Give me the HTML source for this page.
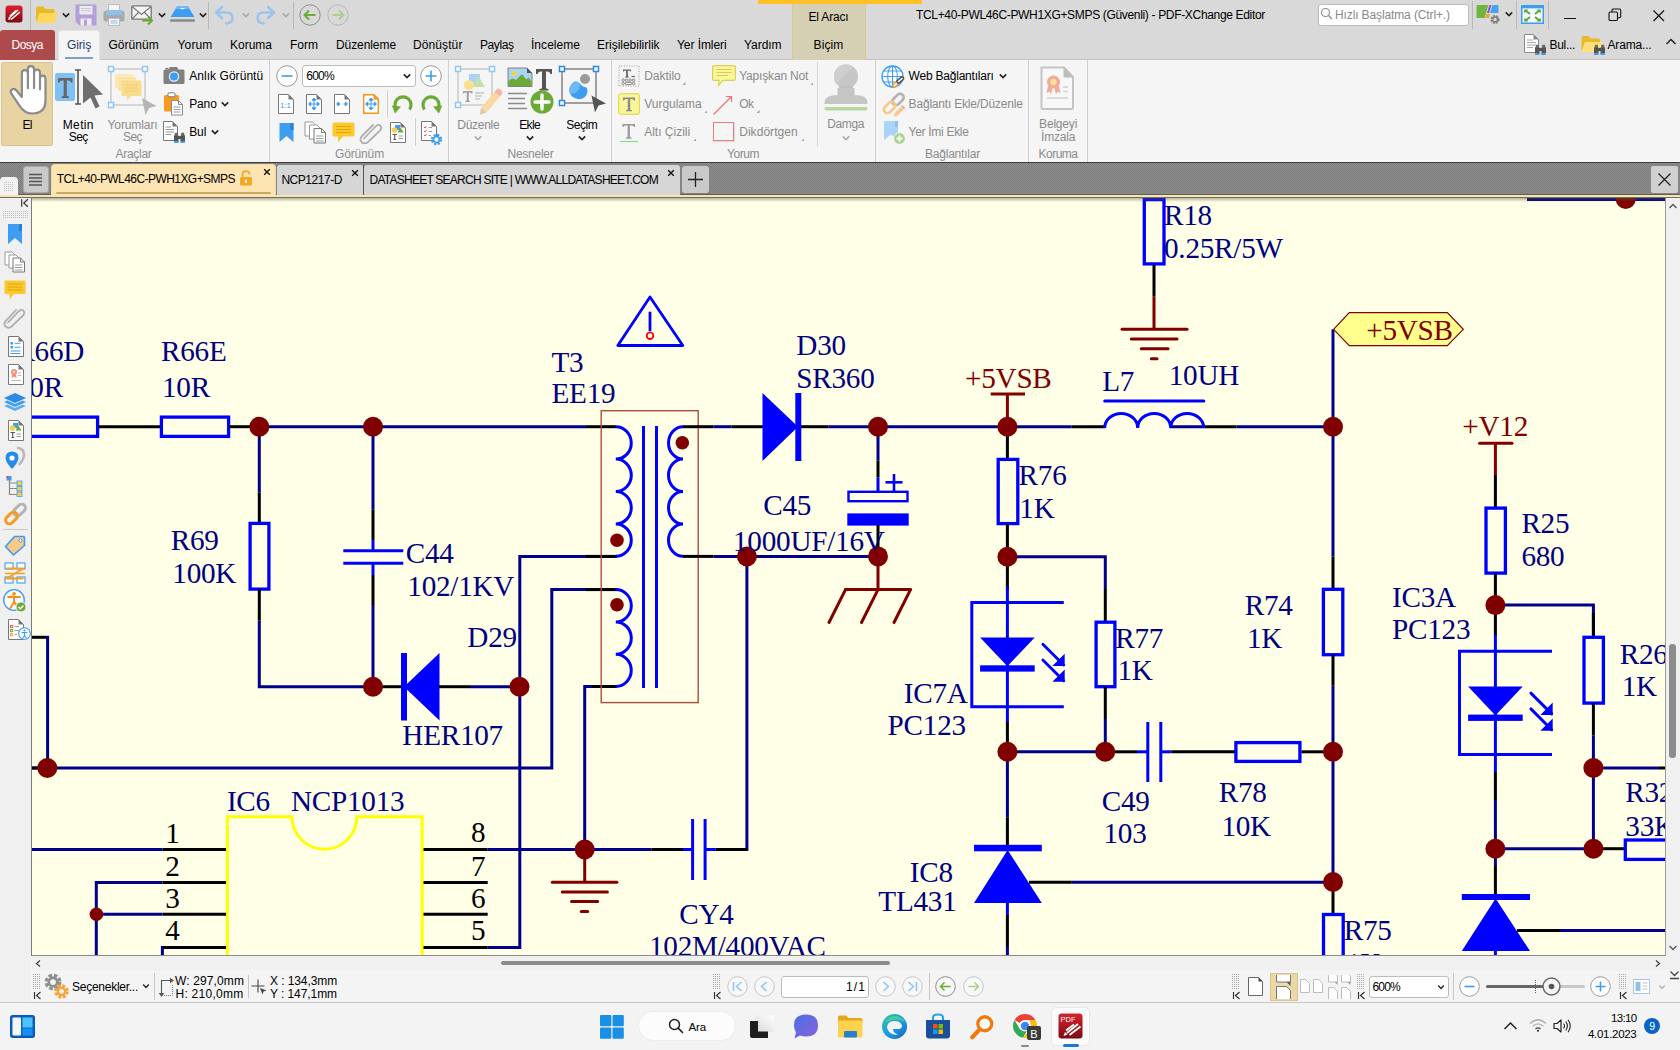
<!DOCTYPE html>
<html lang="tr"><head><meta charset="utf-8"><title>TCL+40-PWL46C-PWH1XG+SMPS (Güvenli) - PDF-XChange Editor</title>
<style>
*{box-sizing:border-box;margin:0;padding:0}
html,body{width:1680px;height:1050px;overflow:hidden;background:#f4f4f4}
body{font-family:"Liberation Sans",sans-serif;font-size:12px;color:#000}
#app{position:relative;width:1680px;height:1050px;overflow:hidden}
.abs{position:absolute}
#docarea{position:absolute;left:0;top:195px;width:1680px;height:762px;background:#f0f0f0}
.t{position:absolute;white-space:nowrap;display:block}

</style></head>
<body>
<div id="app">
<div id="docarea"></div>
<div class="abs" style="left:0px;top:0px;width:1680px;height:60px;background:#d9d9d9"></div>
<div class="abs" style="left:0px;top:59px;width:1680px;height:1px;background:#c4c4c4"></div>
<div class="abs" style="left:758px;top:0px;width:164px;height:4px;background:#ffc125"></div>
<div class="abs" style="left:792px;top:4px;width:74px;height:56px;background:#d5cfb3;border-left:1px solid #d8c98f;border-right:1px solid #d8c98f"></div>
<span class="t" style="left:808.5px;top:10.0px;font-size:12px;line-height:14px;color:#000;letter-spacing:-0.17px;">El Aracı</span>
<span class="t" style="left:813.5px;top:38.2px;font-size:12px;line-height:14px;color:#000;letter-spacing:0.13px;">Biçim</span>
<svg class="abs" style="left:5px;top:5px" width="18" height="18" viewBox="0 0 18 18"><defs><linearGradient id="ag" x1="0" y1="0" x2="0" y2="1"><stop offset="0" stop-color="#e0202c"/><stop offset="1" stop-color="#7a0a10"/></linearGradient></defs><rect x="0.5" y="0.5" width="17" height="17" rx="3" fill="url(#ag)"/><path d="M4,13 L13,5 M6,14.5 L15,7 M5,11 L11,5.5" stroke="#fff" stroke-width="1.6"/><path d="M3,15 L4,12 L6,14 Z" fill="#fff"/></svg>
<div class="abs" style="left:30px;top:0px;width:1px;height:30px;background:#b8b8b8"></div>
<svg class="abs" style="left:35px;top:5px" width="24" height="20" viewBox="0 0 24 20"><path d="M1,3 Q1,1.5 2.5,1.5 H8 L10.5,4 H18 Q19.5,4 19.5,5.5 V16 H1 Z" fill="#e9b92a"/><path d="M4.5,8 H22.5 L19.5,18 H1 Z" fill="#ffd85a"/></svg>
<svg class="abs" style="left:61.3px;top:10.5px" width="10" height="8" viewBox="0 0 10 8"><path d="M1.7999999999999998,2.4 L5,5.6 L8.2,2.4" fill="none" stroke="#222" stroke-width="1.6"/></svg>
<svg class="abs" style="left:75px;top:4px" width="22" height="22" viewBox="0 0 22 22"><path d="M0.5,1.5 Q0.5,0.5 1.5,0.5 H20.5 Q21.5,0.5 21.5,1.5 V21.5 H4.5 L0.5,17.5 Z" fill="#b49fd6"/><rect x="4.5" y="2" width="13" height="8.5" fill="#ececf0"/><path d="M6,4.5 H16 M6,6.8 H16" stroke="#c9c9d2" stroke-width="1"/><rect x="5.5" y="14.5" width="11" height="7" fill="#ececf0"/><rect x="9" y="15.5" width="3" height="6" fill="#b49fd6"/></svg>
<svg class="abs" style="left:103px;top:4px" width="22" height="22" viewBox="0 0 22 22"><rect x="5.5" y="0.5" width="11" height="7" fill="#f4f4f4" stroke="#bdbdbd"/><rect x="0.5" y="7" width="21" height="10.5" rx="2" fill="#a9a9a9"/><rect x="3" y="6" width="16" height="5" fill="#8fc0ea"/><rect x="5.5" y="14.5" width="11" height="7" fill="#f4f4f4" stroke="#bdbdbd"/><path d="M7.5,17 H14.5 M7.5,19 H14.5" stroke="#8fc0ea" stroke-width="1"/></svg>
<svg class="abs" style="left:131px;top:5px" width="24" height="21" viewBox="0 0 24 21"><rect x="0.8" y="0.8" width="19.4" height="13.4" rx="1" fill="#f3f3f3" stroke="#777" stroke-width="1.3"/><path d="M1,1.5 L10.5,9.5 L20,1.5 M1,14 L7.5,7.5 M20,14 L13.5,7.5" fill="none" stroke="#777" stroke-width="1.1"/><path d="M11,15.5 H20.5 M17,11.5 L21,15.5 L17,19.5" fill="none" stroke="#6aaa35" stroke-width="2"/></svg>
<svg class="abs" style="left:157.3px;top:10.5px" width="10" height="8" viewBox="0 0 10 8"><path d="M1.7999999999999998,2.4 L5,5.6 L8.2,2.4" fill="none" stroke="#222" stroke-width="1.6"/></svg>
<svg class="abs" style="left:170px;top:6px" width="25" height="17" viewBox="0 0 25 17"><path d="M7,0.5 H18 L24.5,11 H0.5 Z" fill="#3d9df0"/><path d="M7,0.5 H18 L19.5,3 H5.5 Z" fill="#6db8f7"/><rect x="10.5" y="2" width="4" height="1.2" fill="#fff"/><path d="M1,14.5 H24" stroke="#8a8a8a" stroke-width="2.4" stroke-linecap="round"/></svg>
<svg class="abs" style="left:197.5px;top:10.5px" width="10" height="8" viewBox="0 0 10 8"><path d="M1.7999999999999998,2.4 L5,5.6 L8.2,2.4" fill="none" stroke="#222" stroke-width="1.6"/></svg>
<div class="abs" style="left:208px;top:2px;width:1px;height:27px;background:#b8b8b8"></div>
<svg class="abs" style="left:213px;top:4px" width="24" height="22" viewBox="0 0 24 22"><path d="M9,3 L3,8.5 L9,14 M3.5,8.5 H13 Q19.5,8.5 19.5,14 Q19.5,19 13,19.5" fill="none" stroke="#9cc3ee" stroke-width="2.4" stroke-linecap="round" stroke-linejoin="round"/></svg>
<svg class="abs" style="left:241px;top:10.5px" width="10" height="8" viewBox="0 0 10 8"><path d="M1.7999999999999998,2.4 L5,5.6 L8.2,2.4" fill="none" stroke="#aaa" stroke-width="1.6"/></svg>
<svg class="abs" style="left:253px;top:4px" width="24" height="22" viewBox="0 0 24 22"><path d="M15,3 L21,8.5 L15,14 M20.500,8.5 H11 Q4.500,8.5 4.500,14 Q4.500,19 11,19.5" fill="none" stroke="#9cc3ee" stroke-width="2.4" stroke-linecap="round" stroke-linejoin="round"/></svg>
<svg class="abs" style="left:281px;top:10.5px" width="10" height="8" viewBox="0 0 10 8"><path d="M1.7999999999999998,2.4 L5,5.6 L8.2,2.4" fill="none" stroke="#aaa" stroke-width="1.6"/></svg>
<div class="abs" style="left:293px;top:2px;width:1px;height:27px;background:#b8b8b8"></div>
<svg class="abs" style="left:299px;top:4px" width="22" height="22" viewBox="0 0 22 22"><circle cx="11" cy="11" r="10.2" fill="none" stroke="#8d8d8d" stroke-width="1"/><path d="M16.5,11 H6 M10,6.5 L5.5,11 L10,15.5" fill="none" stroke="#6aaa35" stroke-width="2"/></svg>
<svg class="abs" style="left:327px;top:4px" width="22" height="22" viewBox="0 0 22 22"><circle cx="11" cy="11" r="10.2" fill="none" stroke="#b5b5b5" stroke-width="1"/><path d="M5.5,11 H16 M12,6.5 L16.5,11 L12,15.5" fill="none" stroke="#a9cf8a" stroke-width="2"/></svg>
<span class="t" style="left:916.0px;top:8.2px;font-size:12px;line-height:14px;color:#000;letter-spacing:-0.33px;">TCL+40-PWL46C-PWH1XG+SMPS (Güvenli) - PDF-XChange Editor</span>
<div class="abs" style="left:1317.5px;top:3.5px;width:151px;height:22px;background:#fff;border:1px solid #bdbdbd;border-radius:3px"></div>
<svg class="abs" style="left:1320px;top:7px" width="14" height="14" viewBox="0 0 14 14"><circle cx="5.5" cy="5.5" r="4" fill="none" stroke="#8a8a8a" stroke-width="1.1"/><path d="M8.5,8.500 L12,12" stroke="#8a8a8a" stroke-width="1.2"/></svg>
<span class="t" style="left:1335.0px;top:7.8px;font-size:12px;line-height:14px;color:#8a8a8a;letter-spacing:-0.12px;">Hızlı Başlatma (Ctrl+.)</span>
<div class="abs" style="left:1471.5px;top:1px;width:1px;height:28px;background:#b8b8b8"></div>
<svg class="abs" style="left:1476px;top:4px" width="25" height="22" viewBox="0 0 25 22"><path d="M0.5,1 H12.500 L8.500,14 H0.5 Z" fill="#6fb543"/><path d="M13.5,1 H15.5 L13,9 H11 Z" fill="#8a4fc4"/><path d="M16.500,1 H22.500 V9 H14 Z" fill="#4aa3f0"/><path d="M10,10 H14 L13,14 H9 Z" fill="#f2a33a"/><circle cx="19" cy="15.5" r="3.2" fill="none" stroke="#808080" stroke-width="2.6" stroke-dasharray="1.7 0.9"/><circle cx="19" cy="15.5" r="2.500" fill="none" stroke="#808080" stroke-width="1.4"/></svg>
<svg class="abs" style="left:1503.6px;top:10px" width="10" height="8" viewBox="0 0 10 8"><path d="M1.7999999999999998,2.4 L5,5.6 L8.2,2.4" fill="none" stroke="#222" stroke-width="1.6"/></svg>
<div class="abs" style="left:1515.5px;top:1px;width:1px;height:28px;background:#b8b8b8"></div>
<svg class="abs" style="left:1521px;top:5px" width="23" height="19" viewBox="0 0 23 19"><rect x="0.750" y="0.750" width="21.500" height="17.500" fill="#f4f9ff" stroke="#3d9df0" stroke-width="1.500"/><rect x="0.750" y="0.750" width="21.500" height="2.600" fill="#3d9df0"/><g stroke="#55a630" stroke-width="1.700" fill="none"><path d="M9,9 L4.500,5.500 M14,9 L18.500,5.500 M9,12 L4.500,15.500 M14,12 L18.500,15.500"/></g><path d="M3.200,4.500 h4.300 l-4.300,3.800 z M19.800,4.500 h-4.300 l4.300,3.800 z M3.200,16.600 h4.300 l-4.300,-3.800 z M19.800,16.600 h-4.300 l4.300,-3.800 z" fill="#55a630"/></svg>
<div class="abs" style="left:1547.5px;top:1px;width:1px;height:28px;background:#b8b8b8"></div>
<div class="abs" style="left:1564px;top:17.5px;width:12px;height:1.2px;background:#111"></div>
<svg class="abs" style="left:1608px;top:8px" width="14" height="14" viewBox="0 0 14 14"><rect x="1" y="4" width="8.500" height="8.500" rx="1.2" fill="none" stroke="#111" stroke-width="1.1"/><path d="M4,4 V2.200 Q4,1 5.200,1 H11.5 Q12.700,1 12.700,2.200 V8.500 Q12.700,9.700 11.5,9.700 H9.500" fill="none" stroke="#111" stroke-width="1.1"/></svg>
<svg class="abs" style="left:1652px;top:9px" width="14" height="14" viewBox="0 0 14 14"><path d="M1.500,1.500 L12,12 M12,1.500 L1.500,12" stroke="#111" stroke-width="1.2"/></svg>
<div class="abs" style="left:0px;top:30px;width:55px;height:30px;background:#ad4a4c;border-radius:3px 3px 0 0"></div>
<span class="t" style="left:11.5px;top:38.2px;font-size:12px;line-height:14px;color:#fff;letter-spacing:-0.54px;">Dosya</span>
<div class="abs" style="left:58px;top:30px;width:41.5px;height:30px;background:#f5f5f5;border-radius:4px 4px 0 0;border:1px solid #e4e4e4;border-bottom:none"></div>
<span class="t" style="left:67.0px;top:38.2px;font-size:12px;line-height:14px;color:#1f3a6e;letter-spacing:-0.13px;">Giriş</span>
<div class="abs" style="left:64.5px;top:57px;width:28.5px;height:2px;background:#7f9fc4"></div>
<span class="t" style="left:108.5px;top:38.2px;font-size:12px;line-height:14px;color:#000;letter-spacing:0.04px;">Görünüm</span>
<span class="t" style="left:177.5px;top:38.2px;font-size:12px;line-height:14px;color:#000;letter-spacing:0.15px;">Yorum</span>
<span class="t" style="left:230.0px;top:38.2px;font-size:12px;line-height:14px;color:#000;letter-spacing:-0.00px;">Koruma</span>
<span class="t" style="left:290.0px;top:38.2px;font-size:12px;line-height:14px;color:#000;letter-spacing:0.00px;">Form</span>
<span class="t" style="left:336.0px;top:38.2px;font-size:12px;line-height:14px;color:#000;letter-spacing:-0.08px;">Düzenleme</span>
<span class="t" style="left:413.0px;top:38.2px;font-size:12px;line-height:14px;color:#000;letter-spacing:0.10px;">Dönüştür</span>
<span class="t" style="left:480.0px;top:38.2px;font-size:12px;line-height:14px;color:#000;letter-spacing:-0.42px;">Paylaş</span>
<span class="t" style="left:531.0px;top:38.2px;font-size:12px;line-height:14px;color:#000;letter-spacing:0.04px;">İnceleme</span>
<span class="t" style="left:597.0px;top:38.2px;font-size:12px;line-height:14px;color:#000;letter-spacing:-0.01px;">Erişilebilirlik</span>
<span class="t" style="left:677.0px;top:38.2px;font-size:12px;line-height:14px;color:#000;letter-spacing:-0.07px;">Yer İmleri</span>
<span class="t" style="left:744.0px;top:38.2px;font-size:12px;line-height:14px;color:#000;letter-spacing:-0.05px;">Yardım</span>
<svg class="abs" style="left:1524px;top:34px" width="15" height="19" viewBox="0 0 15 19"><path d="M0.5,0.5 H9.5 L14.5,5.5 V18.5 H0.5 Z" fill="#fff" stroke="#8a8a8a" stroke-width="1"/><path d="M9.5,0.5 V5.5 H14.5 Z" fill="#8a8a8a"/><path d="M3,6 H9 M3,8.500 H12 M3,11 H12 M3,13.500 H9" stroke="#aaa" stroke-width="1"/></svg>
<svg class="abs" style="left:1534px;top:44px" width="13.0" height="11.0" viewBox="0 0 13 11"><rect x="1" y="3" width="4.500" height="7.500" rx="1" fill="#555"/><rect x="7.500" y="3" width="4.500" height="7.500" rx="1" fill="#555"/><rect x="4.500" y="4" width="4" height="3" fill="#555"/><rect x="1.800" y="0.800" width="3" height="3" fill="#666"/><rect x="8.200" y="0.800" width="3" height="3" fill="#666"/><rect x="1" y="9" width="4.500" height="1.800" fill="#3d9df0"/><rect x="7.500" y="9" width="4.500" height="1.800" fill="#3d9df0"/></svg>
<span class="t" style="left:1549.5px;top:37.6px;font-size:12px;line-height:14px;color:#000;letter-spacing:-0.31px;">Bul...</span>
<svg class="abs" style="left:1581px;top:35px" width="24" height="19" viewBox="0 0 24 19"><path d="M0.5,2.500 Q0.5,1 2,1 H7.500 L10,3.500 H17.500 Q19,3.500 19,5 V15 H0.5 Z" fill="#e9b92a"/><path d="M4,7 H22 L19,17 H0.5 Z" fill="#ffdf7a"/></svg>
<svg class="abs" style="left:1593px;top:44px" width="13.0" height="11.0" viewBox="0 0 13 11"><rect x="1" y="3" width="4.500" height="7.500" rx="1" fill="#555"/><rect x="7.500" y="3" width="4.500" height="7.500" rx="1" fill="#555"/><rect x="4.500" y="4" width="4" height="3" fill="#555"/><rect x="1.800" y="0.800" width="3" height="3" fill="#666"/><rect x="8.200" y="0.800" width="3" height="3" fill="#666"/><rect x="1" y="9" width="4.500" height="1.800" fill="#3d9df0"/><rect x="7.500" y="9" width="4.500" height="1.800" fill="#3d9df0"/></svg>
<span class="t" style="left:1607.5px;top:37.6px;font-size:12px;line-height:14px;color:#000;letter-spacing:-0.17px;">Arama...</span>
<svg class="abs" style="left:1665px;top:37px" width="12" height="9" viewBox="0 0 12 9"><path d="M1.500,7 L6,2.500 L10.500,7" fill="none" stroke="#222" stroke-width="1.5"/></svg>
<div class="abs" style="left:0px;top:60px;width:1680px;height:102px;background:#f5f5f5"></div>
<div class="abs" style="left:0px;top:162px;width:1680px;height:1px;background:#3c3c3c"></div>
<div class="abs" style="left:269px;top:60px;width:1px;height:102px;background:#d0d0d0"></div>
<div class="abs" style="left:448px;top:60px;width:1px;height:102px;background:#d0d0d0"></div>
<div class="abs" style="left:611px;top:60px;width:1px;height:102px;background:#d0d0d0"></div>
<div class="abs" style="left:875px;top:60px;width:1px;height:102px;background:#d0d0d0"></div>
<div class="abs" style="left:1028px;top:60px;width:1px;height:102px;background:#d0d0d0"></div>
<div class="abs" style="left:1087px;top:60px;width:1px;height:102px;background:#d0d0d0"></div>
<span class="t" style="left:115.5px;top:146.6px;font-size:12px;line-height:14px;color:#8c8c8c;letter-spacing:-0.29px;">Araçlar</span>
<span class="t" style="left:335.0px;top:146.6px;font-size:12px;line-height:14px;color:#8c8c8c;letter-spacing:-0.15px;">Görünüm</span>
<span class="t" style="left:507.5px;top:146.6px;font-size:12px;line-height:14px;color:#8c8c8c;letter-spacing:-0.25px;">Nesneler</span>
<span class="t" style="left:727.0px;top:146.6px;font-size:12px;line-height:14px;color:#8c8c8c;letter-spacing:-0.45px;">Yorum</span>
<span class="t" style="left:925.0px;top:146.6px;font-size:12px;line-height:14px;color:#8c8c8c;letter-spacing:-0.22px;">Bağlantılar</span>
<span class="t" style="left:1038.5px;top:146.6px;font-size:12px;line-height:14px;color:#8c8c8c;letter-spacing:-0.50px;">Koruma</span>
<div class="abs" style="left:1px;top:62px;width:52px;height:84px;background:#e8d4a2;border:1px solid #d9c48f;border-radius:2px"></div>
<svg class="abs" style="left:6.5px;top:63.5px" width="46.2" height="57.2" viewBox="0 0 42 52"><path d="M13.500,26 V8.500 Q13.500,5.500 16.200,5.500 Q19,5.500 19,8.500 V5 Q19,2 21.800,2 Q24.600,2 24.600,5 V8 Q24.600,5.200 27.300,5.200 Q30,5.200 30,8.200 V13 Q30,10.500 32.500,10.500 Q35,10.500 35,13.500 V33 Q35,45 23,45 Q16,45 11.500,38 L4,27 Q2.500,24.500 4.800,23 Q7,22 9,24.500 L13.500,30 Z" fill="#fff" stroke="#8c8c8c" stroke-width="2" stroke-linejoin="round"/><path d="M19,8.500 V22 M24.600,8 V22 M30,13 V23" stroke="#8c8c8c" stroke-width="2" stroke-linecap="round"/></svg>
<span class="t" style="left:22.4px;top:117.7px;font-size:12px;line-height:14px;color:#000;letter-spacing:-0.59px;">El</span>
<svg class="abs" style="left:55px;top:66px" width="50" height="48" viewBox="0 0 50 48"><rect x="0" y="7" width="20" height="28" rx="2" fill="#7fc1f5"/><path d="M3,12 H17.500 V16.500 H16 Q15.500,14.500 13.500,14.500 H11.800 V29 Q11.800,30.500 14,30.500 V32 H6.500 V30.500 Q8.700,30.500 8.700,29 V14.500 H7 Q5,14.500 4.500,16.500 H3 Z" fill="#666"/><path d="M20,4 H26 M23,4 V38 M20,38 H26" stroke="#555" stroke-width="1.6"/><path d="M28,9 L48,28.500 L39.500,29.500 L44.500,40.500 L40.500,42.500 L35.500,31.500 L28,37.500 Z" fill="#6e6e6e"/></svg>
<span class="t" style="left:62.8px;top:117.7px;font-size:12px;line-height:14px;color:#000;letter-spacing:0.33px;">Metin</span>
<span class="t" style="left:68.8px;top:130.2px;font-size:12px;line-height:14px;color:#000;letter-spacing:-0.56px;">Seç</span>
<svg class="abs" style="left:107px;top:65px" width="52" height="52" viewBox="0 0 52 52"><rect x="4" y="4" width="34" height="36" fill="none" stroke="#c8c8c8" stroke-width="1.4"/><rect x="8" y="9" width="18" height="14" rx="1.5" fill="#fbe9b7"/><rect x="11" y="12" width="18" height="14" rx="1.5" fill="#fae3a4"/><path d="M14.500,15.500 H33 Q34.500,15.500 34.500,17 V29.500 Q34.500,31 33,31 H24.500 L20,35.500 V31 H16 Q14.500,31 14.500,29.500 Z" fill="#f9dc8e"/><path d="M18,20 H31 M18,23 H31 M18,26 H31" stroke="#f3cd70" stroke-width="1.2"/><rect x="1.500" y="1.500" width="5" height="5" fill="#fff" stroke="#8fc6f4" stroke-width="1.5"/><rect x="35.500" y="1.500" width="5" height="5" fill="#fff" stroke="#8fc6f4" stroke-width="1.5"/><rect x="1.500" y="37.500" width="5" height="5" fill="#fff" stroke="#8fc6f4" stroke-width="1.5"/><path d="M35,33 L49.500,41 L42,43 L38.500,50 Z" fill="#b5b5b5"/></svg>
<span class="t" style="left:107.5px;top:117.7px;font-size:12px;line-height:14px;color:#8a8a8a;letter-spacing:-0.10px;">Yorumları</span>
<span class="t" style="left:123.0px;top:130.2px;font-size:12px;line-height:14px;color:#8a8a8a;letter-spacing:-0.56px;">Seç</span>
<svg class="abs" style="left:163px;top:66px" width="22" height="19" viewBox="0 0 22 19"><path d="M0.5,5 Q0.5,3.500 2,3.500 H5.500 L7,1 H14 L15.500,3.500 H20 Q21.500,3.500 21.500,5 V16.500 Q21.500,18 20,18 H2 Q0.5,18 0.5,16.500 Z" fill="#808080"/><circle cx="11" cy="10.500" r="5.200" fill="#e9f3fc"/><circle cx="11" cy="10.500" r="4" fill="#3d9df0"/><rect x="2.500" y="1.800" width="3" height="1.700" fill="#808080"/></svg>
<span class="t" style="left:189.2px;top:69.3px;font-size:12px;line-height:14px;color:#000;letter-spacing:0.05px;">Anlık Görüntü</span>
<svg class="abs" style="left:163px;top:92px" width="22" height="24" viewBox="0 0 22 24"><rect x="1" y="3" width="15" height="16.500" rx="1.500" fill="#f79a1f"/><rect x="5" y="0.800" width="7" height="4" rx="1.200" fill="#fff" stroke="#777" stroke-width="1"/><path d="M8.500,8.500 H15.500 L19.500,12.500 V23 H8.500 Z" fill="#fff" stroke="#888" stroke-width="1"/><path d="M15.500,8.500 V12.500 H19.500" fill="none" stroke="#888" stroke-width="1"/><path d="M10.500,15 H17.500 M10.500,17.500 H17.500 M10.500,20 H17.500" stroke="#999" stroke-width="1"/></svg>
<span class="t" style="left:189.2px;top:97.3px;font-size:12px;line-height:14px;color:#000;letter-spacing:-0.13px;">Pano</span>
<svg class="abs" style="left:220.3px;top:99.5px" width="10" height="8" viewBox="0 0 10 8"><path d="M1.7999999999999998,2.4 L5,5.6 L8.2,2.4" fill="none" stroke="#222" stroke-width="1.6"/></svg>
<svg class="abs" style="left:163px;top:121px" width="15" height="20" viewBox="0 0 15 20"><path d="M0.5,0.5 H9.5 L14.5,5.5 V19.5 H0.5 Z" fill="#fff" stroke="#777" stroke-width="1"/><path d="M9.5,0.5 V5.5 H14.5 Z" fill="#777"/><path d="M2.500,6 H8 M2.500,8.500 H11 M2.500,11 H11 M2.500,13.500 H8" stroke="#999" stroke-width="1"/></svg>
<svg class="abs" style="left:173px;top:132px" width="13.0" height="11.0" viewBox="0 0 13 11"><rect x="1" y="3" width="4.500" height="7.500" rx="1" fill="#555"/><rect x="7.500" y="3" width="4.500" height="7.500" rx="1" fill="#555"/><rect x="4.500" y="4" width="4" height="3" fill="#555"/><rect x="1.800" y="0.800" width="3" height="3" fill="#666"/><rect x="8.200" y="0.800" width="3" height="3" fill="#666"/><rect x="1" y="9" width="4.500" height="1.800" fill="#3d9df0"/><rect x="7.500" y="9" width="4.500" height="1.800" fill="#3d9df0"/></svg>
<span class="t" style="left:189.2px;top:125.2px;font-size:12px;line-height:14px;color:#000;letter-spacing:-0.11px;">Bul</span>
<svg class="abs" style="left:210.3px;top:127.5px" width="10" height="8" viewBox="0 0 10 8"><path d="M1.7999999999999998,2.4 L5,5.6 L8.2,2.4" fill="none" stroke="#222" stroke-width="1.6"/></svg>
<svg class="abs" style="left:276.2px;top:65px" width="22" height="22" viewBox="0 0 22 22"><circle cx="11" cy="11" r="10.300" fill="#fff" stroke="#9a9a9a" stroke-width="1"/><path d="M5.500,11 H16.500" stroke="#3d9df0" stroke-width="1.600"/></svg>
<svg class="abs" style="left:420px;top:65px" width="22" height="22" viewBox="0 0 22 22"><circle cx="11" cy="11" r="10.300" fill="#fff" stroke="#9a9a9a" stroke-width="1"/><path d="M5.500,11 H16.500 M11,5.500 V16.500" stroke="#3d9df0" stroke-width="1.600"/></svg>
<div class="abs" style="left:302px;top:64.5px;width:113.5px;height:22px;background:#fff;border:1px solid #bdbdbd;border-radius:3px"></div>
<span class="t" style="left:306.3px;top:69.3px;font-size:12px;line-height:14px;color:#000;letter-spacing:-0.80px;">600%</span>
<svg class="abs" style="left:402.2px;top:71.5px" width="10" height="8" viewBox="0 0 10 8"><path d="M1.7999999999999998,2.4 L5,5.6 L8.2,2.4" fill="none" stroke="#222" stroke-width="1.6"/></svg>
<svg class="abs" style="left:278.3px;top:93.5px" width="16" height="20" viewBox="0 0 16 20"><path d="M0.5,0.5 H10.5 L15.5,5.5 V19.5 H0.5 Z" fill="#fff" stroke="#777" stroke-width="1"/><path d="M10.5,0.5 V5.5 H15.5 Z" fill="#777"/><text x="7.500" y="14" font-size="8" fill="#3d9df0" text-anchor="middle" font-family="Liberation Sans,sans-serif">1:1</text></svg>
<svg class="abs" style="left:306.3px;top:93.5px" width="16" height="20" viewBox="0 0 16 20"><path d="M0.5,0.5 H10.5 L15.5,5.5 V19.5 H0.5 Z" fill="#fff" stroke="#777" stroke-width="1"/><path d="M10.5,0.5 V5.5 H15.5 Z" fill="#777"/><path d="M8,4.500 V15.500 M3,10 H13 M8,4 l-2,2.200 h4 z M8,16 l-2,-2.200 h4 z M2.500,10 l2.200,-2 v4 z M13.500,10 l-2.200,-2 v4 z" stroke="#3d9df0" stroke-width="1" fill="#3d9df0"/></svg>
<svg class="abs" style="left:334.3px;top:93.5px" width="16" height="20" viewBox="0 0 16 20"><path d="M0.5,0.5 H10.5 L15.5,5.5 V19.5 H0.5 Z" fill="#fff" stroke="#777" stroke-width="1"/><path d="M10.5,0.5 V5.5 H15.5 Z" fill="#777"/><path d="M3,10 H6.500 M9.500,10 H13 M2.500,10 l2.200,-2 v4 z M13.500,10 l-2.200,-2 v4 z" stroke="#3d9df0" stroke-width="1" fill="#3d9df0"/></svg>
<svg class="abs" style="left:362.5px;top:93.5px" width="16" height="20" viewBox="0 0 16 20"><path d="M0.5,0.5 H10.5 L15.5,5.5 V19.5 H0.5 Z" fill="#fff" stroke="#f7941d" stroke-width="1.800"/><path d="M10.5,0.5 V5.5 H15.5 Z" fill="#f7941d"/><path d="M8,4.500 V15.500 M3,10 H13 M8,4 l-2,2.200 h4 z M8,16 l-2,-2.200 h4 z M2.500,10 l2.200,-2 v4 z M13.500,10 l-2.200,-2 v4 z" stroke="#3d9df0" stroke-width="1" fill="#3d9df0"/></svg>
<div class="abs" style="left:386.5px;top:90px;width:1px;height:28px;background:#cfcfcf"></div>
<svg class="abs" style="left:391px;top:92px" width="23" height="23" viewBox="0 0 23 23"><path d="M5.500,17.500 A8,8 0 1 1 18.500,17.500" fill="none" stroke="#6aaa35" stroke-width="3.200"/><path d="M0.800,13.500 L10,14.500 L4,21.500 Z" fill="#6aaa35"/></svg>
<svg class="abs" style="left:419.5px;top:92px" width="23" height="23" viewBox="0 0 23 23"><path d="M17.500,17.500 A8,8 0 1 0 4.500,17.500" fill="none" stroke="#6aaa35" stroke-width="3.200"/><path d="M22.200,13.500 L13,14.500 L19,21.500 Z" fill="#6aaa35"/></svg>
<svg class="abs" style="left:279px;top:121.5px" width="15" height="21" viewBox="0 0 15 21"><path d="M0.5,1 H14.500 V20 L7.500,14 L0.5,20 Z" fill="#3d9df0"/><path d="M11.500,1 H14.500 V8 H11.500 Z" fill="#2a7fd0"/></svg>
<svg class="abs" style="left:304px;top:121px" width="23" height="23" viewBox="0 0 23 23"><path d="M1,1 H8.500 L12,4.500 V15 H1 Z" fill="#fff" stroke="#999" stroke-width="1"/><path d="M5.500,4 H13 L16.500,7.500 V18 H5.500 Z" fill="#fff" stroke="#999" stroke-width="1"/><path d="M10,7.500 H17.500 L21.500,11.500 V22 H10 Z" fill="#fff" stroke="#777" stroke-width="1"/><path d="M17.500,7.500 V11.500 H21.500" fill="none" stroke="#777"/><path d="M12,15 H19.500 M12,17.500 H19.500 M12,20 H19.500" stroke="#999" stroke-width="1"/></svg>
<svg class="abs" style="left:331.5px;top:121.5px" width="23" height="22" viewBox="0 0 23 22"><path d="M1.500,0.5 H21 Q22.500,0.5 22.500,2 V13 Q22.500,14.500 21,14.500 H11 L6,20.500 V14.500 H1.500 Q0.5,14.500 0.5,13 V2 Q0.5,0.5 1.500,0.5 Z" fill="#fbc92e"/><path d="M4,4.500 H19 M4,7.500 H19 M4,10.500 H19" stroke="#e0a800" stroke-width="1.200"/></svg>
<svg class="abs" style="left:359px;top:120.5px" width="24" height="23" viewBox="0 0 24 23"><path d="M5,17.500 L16.500,5.500 Q19.500,2.500 21.500,4.800 Q23.500,7 20.500,10 L9,21 Q5.500,24 2.500,21 Q0,18 3.500,14.500 L14,4" fill="none" stroke="#b0b0b0" stroke-width="1.800" stroke-linecap="round"/></svg>
<svg class="abs" style="left:390px;top:121.5px" width="16" height="21" viewBox="0 0 16 21"><path d="M0.5,0.5 H10.5 L15.5,5.5 V20.5 H0.5 Z" fill="#fff" stroke="#777" stroke-width="1"/><path d="M10.5,0.5 V5.5 H15.5 Z" fill="#777"/><rect x="5" y="3" width="5" height="5" fill="#3d9df0"/><circle cx="4.500" cy="8" r="2.800" fill="#f5d04a"/><path d="M7.500,10.500 L10.500,5.500 L13.500,10.500 Z" fill="#6aaa35"/><path d="M2.500,12.500 H7 M4.750,12.500 V17.500 M3.500,17.500 H6" stroke="#555" stroke-width="1.100"/><path d="M8.500,14 H13 M8.500,16.500 H13" stroke="#999" stroke-width="1"/></svg>
<div class="abs" style="left:414.5px;top:118px;width:1px;height:28px;background:#cfcfcf"></div>
<svg class="abs" style="left:420.5px;top:121px" width="16" height="20" viewBox="0 0 16 20"><path d="M0.5,0.5 H10.5 L15.5,5.5 V19.5 H0.5 Z" fill="#fff" stroke="#777" stroke-width="1"/><path d="M10.5,0.5 V5.5 H15.5 Z" fill="#777"/><path d="M3,6 l1,1 l1.500,-2 M3,10 l1,1 l1.500,-2 M3,14 l1,1 l1.500,-2" stroke="#e8533a" stroke-width="1" fill="none"/><path d="M7.500,6.500 H11 M7.500,10.500 H11 M7.500,14.500 H10" stroke="#999" stroke-width="1"/></svg>
<svg class="abs" style="left:430px;top:133px" width="13" height="13" viewBox="0 0 13 13"><circle cx="6.500" cy="6.500" r="4" fill="none" stroke="#3d9df0" stroke-width="3.400" stroke-dasharray="1.900 1.250"/><circle cx="6.500" cy="6.500" r="3" fill="#f5f5f5" stroke="#3d9df0" stroke-width="1.600"/></svg>
<svg class="abs" style="left:454px;top:65px" width="50" height="52" viewBox="0 0 50 52"><rect x="4" y="4" width="34" height="36" fill="none" stroke="#c8c8c8" stroke-width="1.400"/><rect x="15" y="9" width="11" height="11" fill="#a9d3f7"/><path d="M18,22 L24.500,11 L31,22 Z" fill="#c4dfae"/><circle cx="15" cy="20" r="5" fill="#f8e08e"/><path d="M9,26 H18.500 V28.500 H17.500 Q17.200,27.500 16,27.500 H14.800 V35 Q14.800,36 16,36 V37 H11.500 V36 Q12.700,36 12.700,35 V27.500 H11.500 Q10.300,27.500 10,28.500 H9 Z" fill="#a0a0a0"/><path d="M21,28 H30 M21,31 H28 M21,34 H26" stroke="#c8c8c8" stroke-width="1.300"/><rect x="1.500" y="1.500" width="5" height="5" fill="#fff" stroke="#8fc6f4" stroke-width="1.500"/><rect x="35.500" y="1.500" width="5" height="5" fill="#fff" stroke="#8fc6f4" stroke-width="1.500"/><rect x="1.500" y="37.500" width="5" height="5" fill="#fff" stroke="#8fc6f4" stroke-width="1.500"/><path d="M27,43 L40.500,27 L46,31.500 L32.500,47.500 L26,49.500 Z" fill="#f8d9a4"/><path d="M40.500,27 L43,24 Q44.500,23 46,24.200 L48,26 Q49,27.500 48,28.800 L46,31.500 Z" fill="#f6b3a8"/><path d="M27,43 L32.500,47.500 L26,49.500 Z" fill="#d8c8b0"/></svg>
<span class="t" style="left:457.3px;top:117.7px;font-size:12px;line-height:14px;color:#8a8a8a;letter-spacing:-0.29px;">Düzenle</span>
<svg class="abs" style="left:473.3px;top:133.5px" width="10" height="8" viewBox="0 0 10 8"><path d="M1.7999999999999998,2.4 L5,5.6 L8.2,2.4" fill="none" stroke="#aaa" stroke-width="1.6"/></svg>
<svg class="abs" style="left:507px;top:66px" width="48" height="48" viewBox="0 0 48 48"><path d="M1,2 H20 L25,7 V20.500 H1 Z" fill="#a8d4f5" stroke="#808080" stroke-width="1"/><path d="M20,2 V7 H25 Z" fill="#555"/><circle cx="7" cy="7.500" r="2.500" fill="#f8d04a"/><path d="M1.500,20 V15 Q5,10.500 9,14 L15,8 L19,13.500 L21.500,11.500 L24.500,15.500 V20 Z" fill="#6aaa35"/><path d="M29,3 H45 V8 H43.500 Q43,5.500 40.500,5.500 H39 V21.500 Q39,23 41.500,23 V24.500 H32.500 V23 Q35,23 35,21.500 V5.500 H33.500 Q31,5.500 30.500,8 H29 Z" fill="#555"/><path d="M1,27.500 H20 M1,32.500 H18 M1,37.500 H18 M1,42.500 H20" stroke="#8a8a8a" stroke-width="1.600"/><circle cx="35" cy="36" r="11.500" fill="#6aaa35"/><path d="M28,36 H42 M35,29 V43" stroke="#fff" stroke-width="3.400" stroke-linecap="round"/></svg>
<span class="t" style="left:519.2px;top:117.7px;font-size:12px;line-height:14px;color:#000;letter-spacing:-0.59px;">Ekle</span>
<svg class="abs" style="left:524.7px;top:133.5px" width="10" height="8" viewBox="0 0 10 8"><path d="M1.7999999999999998,2.4 L5,5.6 L8.2,2.4" fill="none" stroke="#222" stroke-width="1.6"/></svg>
<svg class="abs" style="left:558px;top:65px" width="50" height="50" viewBox="0 0 50 50"><rect x="4" y="4" width="34" height="34" fill="none" stroke="#8a8a8a" stroke-width="1.600"/><circle cx="27" cy="14" r="5" fill="#9a9a9a"/><path d="M13,20 Q17,14 22,18.500 Q24,22 28.500,22.500 Q31,27 27,32 Q20,37 13.500,31 Q9.500,26 13,20 Z" fill="#3d9df0"/><path d="M13,20 Q17,14 22,18.500 Q22.500,25 17,28 Q13,30 11.500,27 Q10.500,23 13,20 Z" fill="#6db8f7"/><rect x="1.500" y="1.500" width="5" height="5" fill="#fff" stroke="#2a8be6" stroke-width="1.500"/><rect x="35.500" y="1.500" width="5" height="5" fill="#fff" stroke="#2a8be6" stroke-width="1.500"/><rect x="1.500" y="35.500" width="5" height="5" fill="#fff" stroke="#2a8be6" stroke-width="1.500"/><path d="M33.500,30.500 L48,38.500 L40.500,40.500 L37,47.500 Z" fill="#555"/></svg>
<span class="t" style="left:566.2px;top:117.7px;font-size:12px;line-height:14px;color:#000;letter-spacing:-0.47px;">Seçim</span>
<svg class="abs" style="left:576.7px;top:133.5px" width="10" height="8" viewBox="0 0 10 8"><path d="M1.7999999999999998,2.4 L5,5.6 L8.2,2.4" fill="none" stroke="#222" stroke-width="1.6"/></svg>
<svg class="abs" style="left:618px;top:65px" width="22" height="22" viewBox="0 0 22 22"><rect x="1" y="1" width="20" height="20" fill="none" stroke="#9a9a9a" stroke-width="1" stroke-dasharray="1 1.500"/><path d="M5,4.500 H13 V6.500 H12.300 Q12,5.700 11,5.700 H9.900 V11 Q9.900,11.800 11,11.800 V12.500 H7 V11.800 Q8.100,11.800 8.100,11 V5.700 H7 Q6,5.700 5.700,6.500 H5 Z" fill="#666"/><path d="M13.500,11.500 H17" stroke="#666" stroke-width="1.200"/><g fill="none" stroke="#777" stroke-width="0.900"><rect x="4" y="14" width="2.300" height="2.300" rx="0.800"/><rect x="7.500" y="14" width="2.300" height="2.300" rx="0.800"/><rect x="11" y="14" width="2.300" height="2.300" rx="0.800"/><rect x="14.500" y="14" width="2.300" height="2.300" rx="0.800"/><rect x="4" y="17.300" width="2.300" height="2.300" rx="0.800"/><rect x="7.500" y="17.300" width="6" height="2.300" rx="0.800"/><rect x="14.500" y="17.300" width="2.300" height="2.300" rx="0.800"/></g></svg>
<span class="t" style="left:644.2px;top:69.3px;font-size:12px;line-height:14px;color:#8a8a8a;letter-spacing:-0.03px;">Daktilo</span>
<svg class="abs" style="left:682.0px;top:81.5px" width="3.5" height="3.5" viewBox="0 0 3.5 3.5"><path d="M3.500,0 V3.500 H0 Z" fill="#a0a0a0"/></svg>
<svg class="abs" style="left:618px;top:93px" width="22" height="22" viewBox="0 0 22 22"><rect x="0.600" y="0.600" width="20.800" height="20.800" rx="3" fill="#f8f59a" stroke="#e3dc5a" stroke-width="1.200"/><path d="M5,4.500 H17 V7.500 H16 Q15.700,6 14,6 H12.200 V16 Q12.200,17.200 14,17.200 V18.300 H8 V17.200 Q9.800,17.200 9.800,16 V6 H8 Q6.300,6 6,7.500 H5 Z" fill="#8a8a8a"/></svg>
<span class="t" style="left:644.2px;top:97.3px;font-size:12px;line-height:14px;color:#8a8a8a;letter-spacing:-0.01px;">Vurgulama</span>
<svg class="abs" style="left:703.5px;top:109.5px" width="3.5" height="3.5" viewBox="0 0 3.5 3.5"><path d="M3.500,0 V3.500 H0 Z" fill="#a0a0a0"/></svg>
<svg class="abs" style="left:618px;top:121px" width="22" height="23" viewBox="0 0 22 23"><path d="M4.500,3 H17 V6 H16 Q15.700,4.500 14,4.500 H11.900 V15.500 Q11.900,16.700 13.700,16.700 V17.800 H7.800 V16.700 Q9.600,16.700 9.600,15.500 V4.500 H7.500 Q5.800,4.500 5.500,6 H4.500 Z" fill="#9a9a9a"/><path d="M2,20.500 H20" stroke="#7fe08a" stroke-width="1.200"/></svg>
<span class="t" style="left:644.2px;top:125.2px;font-size:12px;line-height:14px;color:#8a8a8a;letter-spacing:-0.00px;">Altı Çizili</span>
<svg class="abs" style="left:692.5px;top:137.5px" width="3.5" height="3.5" viewBox="0 0 3.5 3.5"><path d="M3.500,0 V3.500 H0 Z" fill="#a0a0a0"/></svg>
<svg class="abs" style="left:712px;top:65px" width="24" height="23" viewBox="0 0 24 23"><path d="M2.500,0.600 H21.500 Q23.400,0.600 23.400,2.500 V13.500 Q23.400,15.400 21.500,15.400 H11 L6.500,20.500 L7,15.400 H2.500 Q0.600,15.400 0.600,13.500 V2.500 Q0.600,0.600 2.500,0.600 Z" fill="#f8f59a" stroke="#d8d05a" stroke-width="1.200"/><path d="M4.500,4.500 H19.500 M4.500,7.500 H19.500 M4.500,10.500 H16" stroke="#d4cc55" stroke-width="1.100"/></svg>
<span class="t" style="left:739.2px;top:69.3px;font-size:12px;line-height:14px;color:#8a8a8a;letter-spacing:-0.18px;">Yapışkan Not</span>
<svg class="abs" style="left:809.5px;top:81.5px" width="3.5" height="3.5" viewBox="0 0 3.5 3.5"><path d="M3.500,0 V3.500 H0 Z" fill="#a0a0a0"/></svg>
<svg class="abs" style="left:712px;top:94px" width="22" height="22" viewBox="0 0 22 22"><path d="M1.500,20.500 L19,3 M14,2.500 H19.500 V8" fill="none" stroke="#f0707a" stroke-width="1.200"/></svg>
<span class="t" style="left:739.2px;top:97.3px;font-size:12px;line-height:14px;color:#8a8a8a;letter-spacing:-0.42px;">Ok</span>
<svg class="abs" style="left:756.0px;top:109.5px" width="3.5" height="3.5" viewBox="0 0 3.5 3.5"><path d="M3.500,0 V3.500 H0 Z" fill="#a0a0a0"/></svg>
<div class="abs" style="left:713px;top:122px;width:20.5px;height:19px;border:1.300px solid #f07a7a;background:#f5f5f5;box-shadow:1px 1px 1px #e0e0e0"></div>
<span class="t" style="left:739.2px;top:125.2px;font-size:12px;line-height:14px;color:#8a8a8a;letter-spacing:0.05px;">Dikdörtgen</span>
<svg class="abs" style="left:800.5px;top:137.5px" width="3.5" height="3.5" viewBox="0 0 3.5 3.5"><path d="M3.500,0 V3.500 H0 Z" fill="#a0a0a0"/></svg>
<div class="abs" style="left:817px;top:62px;width:1px;height:84px;background:#d4d4d4"></div>
<svg class="abs" style="left:823px;top:64px" width="46" height="48" viewBox="0 0 46 48"><circle cx="23" cy="12.500" r="12" fill="#c6c6c6"/><path d="M16,22 H30 V31 H16 Z" fill="#c0c0c0"/><path d="M14.500,24 H31.500 V31 Q44,31 44.500,38 V40 H1.500 V38 Q2,31 14.500,31 Z" fill="#c6c6c6"/><path d="M11,12.500 A12,12 0 0 1 30,2.700 L13,20 Q11,17 11,12.500 Z" fill="#cfcfcf"/><rect x="1.500" y="43" width="43" height="3.600" rx="1.800" fill="#b5d79e"/></svg>
<span class="t" style="left:827.2px;top:117.2px;font-size:12px;line-height:14px;color:#8a8a8a;letter-spacing:-0.34px;">Damga</span>
<svg class="abs" style="left:840.7px;top:133.5px" width="10" height="8" viewBox="0 0 10 8"><path d="M1.7999999999999998,2.4 L5,5.6 L8.2,2.4" fill="none" stroke="#aaa" stroke-width="1.6"/></svg>
<svg class="abs" style="left:881px;top:65px" width="24" height="24" viewBox="0 0 24 24"><circle cx="11.500" cy="11.500" r="10.500" fill="#fff" stroke="#3d9df0" stroke-width="1.300"/><ellipse cx="11.500" cy="11.500" rx="4.800" ry="10.500" fill="none" stroke="#3d9df0" stroke-width="1.100"/><path d="M1,11.500 H22 M11.500,1 V22 M2.800,6 H20.200 M2.800,17 H20.200" stroke="#3d9df0" stroke-width="1.100"/><path d="M13.500,20.500 L16.500,17.500" stroke="#f2a33a" stroke-width="4.600" stroke-linecap="round"/><path d="M13.500,20.500 L16.500,17.500" stroke="#fff" stroke-width="1.600" stroke-linecap="round"/><path d="M17.500,16.500 L21,13.500" stroke="#555" stroke-width="4.600" stroke-linecap="round"/><path d="M17.500,16.500 L21,13.500" stroke="#fff" stroke-width="1.600" stroke-linecap="round"/></svg>
<span class="t" style="left:908.6px;top:69.3px;font-size:12px;line-height:14px;color:#000;letter-spacing:-0.22px;">Web Bağlantıları</span>
<svg class="abs" style="left:998.2px;top:71.5px" width="10" height="8" viewBox="0 0 10 8"><path d="M1.7999999999999998,2.4 L5,5.6 L8.2,2.4" fill="none" stroke="#222" stroke-width="1.6"/></svg>
<svg class="abs" style="left:880px;top:91px" width="27" height="27" viewBox="0 0 27 27"><g fill="none" stroke-width="2.700"><rect x="-6.500" y="-3.600" width="13" height="7.200" rx="3.600" transform="translate(18,8.500) rotate(-45)" stroke="#b4b4b4"/><rect x="-6.500" y="-3.600" width="13" height="7.200" rx="3.600" transform="translate(9.500,16.500) rotate(-45)" stroke="#f6c98a"/></g><path d="M14.500,22 L21,15.500 L24,18.500 L17.500,25 L13.500,26 Z" fill="#f6c98a" stroke="#f5f5f5" stroke-width="0.800"/><path d="M21,15.500 L22.500,14 L25.500,17 L24,18.500 Z" fill="#f4a9a0"/></svg>
<span class="t" style="left:908.6px;top:97.3px;font-size:12px;line-height:14px;color:#8a8a8a;letter-spacing:-0.19px;">Bağlantı Ekle/Düzenle</span>
<svg class="abs" style="left:883px;top:120px" width="24" height="25" viewBox="0 0 24 25"><path d="M1,1 H15 V20 L8,14.500 L1,20 Z" fill="#a9d3f7"/><path d="M12,1 H15 V7 H12 Z" fill="#8fc0ea"/><circle cx="16.500" cy="18.500" r="5.800" fill="#a9d38e" stroke="#f5f5f5" stroke-width="1"/><path d="M13.500,18.500 H19.500 M16.500,15.500 V21.500" stroke="#fff" stroke-width="1.800"/></svg>
<span class="t" style="left:908.6px;top:125.2px;font-size:12px;line-height:14px;color:#8a8a8a;letter-spacing:-0.30px;">Yer İmi Ekle</span>
<svg class="abs" style="left:1040px;top:66px" width="35" height="45" viewBox="0 0 35 45"><path d="M1.500,1.500 H24 L33,11 V41.500 Q33,43 31.500,43 H3 Q1.500,43 1.500,41.500 Z" fill="#f8f8f8" stroke="#c4c4c4" stroke-width="2"/><path d="M23.500,1 V11.500 H33.500 Z" fill="#bdbdbd"/><path d="M8,20 L6.500,27.500 L9.500,25.500 L11,28.500 L12.500,22 M14.500,22 L16,28.500 L17.500,25.500 L20.500,27.500 L19,20" fill="#f4a898"/><circle cx="13.500" cy="16" r="6.500" fill="#f4a898"/><circle cx="13.500" cy="16" r="3.200" fill="#fbe19a"/><path d="M23,21 H28 M23,25.500 H28 M7,32 H28" stroke="#d0d0d0" stroke-width="1.600"/></svg>
<span class="t" style="left:1039.1px;top:117.2px;font-size:12px;line-height:14px;color:#8a8a8a;letter-spacing:-0.19px;">Belgeyi</span>
<span class="t" style="left:1041.1px;top:129.8px;font-size:12px;line-height:14px;color:#8a8a8a;letter-spacing:-0.22px;">İmzala</span>
<div class="abs" style="left:0px;top:163px;width:1680px;height:32px;background:repeating-conic-gradient(#7e7e7e 0% 25%,#8d8d8d 0% 50%) 0 0/2px 2px"></div>
<div class="abs" style="left:0px;top:194px;width:1680px;height:1px;background:#5e5e5e"></div>
<div class="abs" style="left:0px;top:195px;width:1680px;height:2px;background:#fbe4a8"></div>
<div class="abs" style="left:0px;top:197px;width:1680px;height:1px;background:#6e6e6e"></div>
<div class="abs" style="left:32px;top:198px;width:1633px;height:4px;background:linear-gradient(rgba(90,90,60,0.450),rgba(120,120,90,0));z-index:5"></div>
<div class="abs" style="left:0px;top:177px;width:18px;height:18px;background:#f2f2f2;border-radius:4px 4px 0 0"></div>
<svg class="abs" style="left:3px;top:181px" width="12" height="12" viewBox="0 0 12 12"><g fill="#c0c0c0"><rect x="1" y="1" width="1" height="1"/><rect x="1" y="3" width="1" height="1"/><rect x="1" y="5" width="1" height="1"/><rect x="1" y="7" width="1" height="1"/><rect x="1" y="9" width="1" height="1"/><rect x="3" y="1" width="1" height="1"/><rect x="3" y="3" width="1" height="1"/><rect x="3" y="5" width="1" height="1"/><rect x="3" y="7" width="1" height="1"/><rect x="3" y="9" width="1" height="1"/><rect x="5" y="1" width="1" height="1"/><rect x="5" y="3" width="1" height="1"/><rect x="5" y="5" width="1" height="1"/><rect x="5" y="7" width="1" height="1"/><rect x="5" y="9" width="1" height="1"/><rect x="7" y="1" width="1" height="1"/><rect x="7" y="3" width="1" height="1"/><rect x="7" y="5" width="1" height="1"/><rect x="7" y="7" width="1" height="1"/><rect x="7" y="9" width="1" height="1"/><rect x="9" y="1" width="1" height="1"/><rect x="9" y="3" width="1" height="1"/><rect x="9" y="5" width="1" height="1"/><rect x="9" y="7" width="1" height="1"/><rect x="9" y="9" width="1" height="1"/></g></svg>
<div class="abs" style="left:22.5px;top:166px;width:26.5px;height:27px;background:#c9c9c9;border:1px solid #a9a9a9;border-radius:3px"></div>
<svg class="abs" style="left:28px;top:172px" width="15" height="15" viewBox="0 0 15 15"><path d="M1,2.500 H14 M1,6 H14 M1,9.500 H14 M1,13 H14" stroke="#555" stroke-width="1.500"/></svg>
<div class="abs" style="left:51px;top:163.5px;width:225px;height:32px;background:#fce5b2;border-radius:4px 4px 0 0;border:1px solid #f4dca0;border-bottom:none"></div>
<div class="abs" style="left:56px;top:192px;width:215px;height:2px;background:#c9a968;border-radius:1px"></div>
<span class="t" style="left:56.8px;top:172.2px;font-size:12px;line-height:14px;color:#000;letter-spacing:-0.56px;">TCL+40-PWL46C-PWH1XG+SMPS</span>
<svg class="abs" style="left:239px;top:170px" width="14" height="16" viewBox="0 0 14 16"><path d="M3.500,7 V4.500 Q3.500,1.200 7,1.200 Q10.500,1.200 10.500,4.500" fill="none" stroke="#f5a623" stroke-width="1.800"/><rect x="1" y="7" width="12" height="8.500" rx="1.500" fill="#f5a623"/><rect x="6" y="9.500" width="2" height="3.500" rx="1" fill="#fff"/></svg>
<svg class="abs" style="left:263.3px;top:168px" width="8" height="8" viewBox="0 0 8 8"><path d="M1.200,1.200 L6.800,6.800 M6.800,1.200 L1.200,6.800" stroke="#111" stroke-width="1.400"/></svg>
<div class="abs" style="left:276.5px;top:164.5px;width:87px;height:30px;background:#d6d6d6;border-radius:3px 3px 0 0"></div>
<span class="t" style="left:281.4px;top:173.0px;font-size:12px;line-height:14px;color:#000;letter-spacing:-0.47px;">NCP1217-D</span>
<svg class="abs" style="left:351.3px;top:168.5px" width="8" height="8" viewBox="0 0 8 8"><path d="M1.200,1.200 L6.800,6.800 M6.800,1.200 L1.200,6.800" stroke="#111" stroke-width="1.400"/></svg>
<div class="abs" style="left:363.3px;top:164.5px;width:1px;height:30px;background:#555"></div>
<div class="abs" style="left:364.3px;top:164.5px;width:315.5px;height:30px;background:#d6d6d6;border-radius:3px 3px 0 0"></div>
<span class="t" style="left:369.5px;top:173.0px;font-size:12px;line-height:14px;color:#000;letter-spacing:-0.75px;">DATASHEET SEARCH SITE | WWW.ALLDATASHEET.COM</span>
<svg class="abs" style="left:667.3px;top:168.5px" width="8" height="8" viewBox="0 0 8 8"><path d="M1.200,1.200 L6.800,6.800 M6.800,1.200 L1.200,6.800" stroke="#111" stroke-width="1.400"/></svg>
<div class="abs" style="left:682px;top:166px;width:27px;height:27px;background:#c9c9c9;border-radius:3px"></div>
<svg class="abs" style="left:687px;top:171px" width="17" height="17" viewBox="0 0 17 17"><path d="M8.500,1 V16 M1,8.500 H16" stroke="#222" stroke-width="1.300"/></svg>
<div class="abs" style="left:1650.5px;top:166px;width:27px;height:27px;background:#d0d0d0;border-radius:2px"></div>
<svg class="abs" style="left:1657px;top:172px" width="15" height="15" viewBox="0 0 15 15"><path d="M1.500,1.500 L13.500,13.500 M13.500,1.500 L1.500,13.500" stroke="#222" stroke-width="1.300"/></svg>
<div class="abs" style="left:0px;top:198px;width:31px;height:805px;background:#f0f0f0"></div>
<div class="abs" style="left:31px;top:198px;width:1px;height:758px;background:#7a7a7a"></div>
<svg class="abs" style="left:20px;top:198px" width="10" height="10" viewBox="0 0 12 12"><path d="M2,1.500 V10.500 M9.500,1.500 L4.500,6 L9.500,10.500" fill="none" stroke="#333" stroke-width="1.400"/></svg>
<svg class="abs" style="left:2px;top:210px" width="27" height="9" viewBox="0 0 27 9"><g fill="#bcbcbc"><rect x="1" y="1" width="1" height="1"/><rect x="1" y="3" width="1" height="1"/><rect x="1" y="5" width="1" height="1"/><rect x="1" y="7" width="1" height="1"/><rect x="3" y="1" width="1" height="1"/><rect x="3" y="3" width="1" height="1"/><rect x="3" y="5" width="1" height="1"/><rect x="3" y="7" width="1" height="1"/><rect x="5" y="1" width="1" height="1"/><rect x="5" y="3" width="1" height="1"/><rect x="5" y="5" width="1" height="1"/><rect x="5" y="7" width="1" height="1"/><rect x="7" y="1" width="1" height="1"/><rect x="7" y="3" width="1" height="1"/><rect x="7" y="5" width="1" height="1"/><rect x="7" y="7" width="1" height="1"/><rect x="9" y="1" width="1" height="1"/><rect x="9" y="3" width="1" height="1"/><rect x="9" y="5" width="1" height="1"/><rect x="9" y="7" width="1" height="1"/><rect x="11" y="1" width="1" height="1"/><rect x="11" y="3" width="1" height="1"/><rect x="11" y="5" width="1" height="1"/><rect x="11" y="7" width="1" height="1"/><rect x="13" y="1" width="1" height="1"/><rect x="13" y="3" width="1" height="1"/><rect x="13" y="5" width="1" height="1"/><rect x="13" y="7" width="1" height="1"/><rect x="15" y="1" width="1" height="1"/><rect x="15" y="3" width="1" height="1"/><rect x="15" y="5" width="1" height="1"/><rect x="15" y="7" width="1" height="1"/><rect x="17" y="1" width="1" height="1"/><rect x="17" y="3" width="1" height="1"/><rect x="17" y="5" width="1" height="1"/><rect x="17" y="7" width="1" height="1"/><rect x="19" y="1" width="1" height="1"/><rect x="19" y="3" width="1" height="1"/><rect x="19" y="5" width="1" height="1"/><rect x="19" y="7" width="1" height="1"/><rect x="21" y="1" width="1" height="1"/><rect x="21" y="3" width="1" height="1"/><rect x="21" y="5" width="1" height="1"/><rect x="21" y="7" width="1" height="1"/><rect x="23" y="1" width="1" height="1"/><rect x="23" y="3" width="1" height="1"/><rect x="23" y="5" width="1" height="1"/><rect x="23" y="7" width="1" height="1"/><rect x="25" y="1" width="1" height="1"/><rect x="25" y="3" width="1" height="1"/><rect x="25" y="5" width="1" height="1"/><rect x="25" y="7" width="1" height="1"/></g></svg>
<svg class="abs" style="left:4.0px;top:223.0px" width="22" height="22" viewBox="0 0 22 22"><path d="M4,1 H18 V21 L11,15 L4,21 Z" fill="#3d9df0"/><path d="M15,1 H18 V8 H15 Z" fill="#2a7fd0"/></svg>
<svg class="abs" style="left:4.0px;top:251.0px" width="22" height="22" viewBox="0 0 22 22"><path d="M1,1 H8 L11.500,4.500 V14 H1 Z" fill="#fff" stroke="#999"/><path d="M5,4 H12 L15.500,7.500 V17 H5 Z" fill="#fff" stroke="#999"/><path d="M9,7 H16.500 L20.500,11 V21 H9 Z" fill="#fff" stroke="#777"/><path d="M16.500,7 V11 H20.500" fill="none" stroke="#777"/><path d="M11,14 H18.500 M11,16.500 H18.500 M11,19 H18.500" stroke="#999"/></svg>
<svg class="abs" style="left:4.0px;top:279.0px" width="22" height="22" viewBox="0 0 22 22"><path d="M1.500,1.500 H20.500 Q21.500,1.500 21.500,2.500 V14 Q21.500,15 20.500,15 H10 L5.500,20.500 V15 H1.500 Q0.500,15 0.500,14 V2.500 Q0.500,1.500 1.500,1.500 Z" fill="#fbc92e"/><path d="M3.500,5 H18.500 M3.500,8 H18.500 M3.500,11 H18.500" stroke="#e0a800" stroke-width="1.200"/></svg>
<svg class="abs" style="left:3.0px;top:306.0px" width="24" height="24" viewBox="0 0 24 24"><path d="M5,16.500 L15.500,5.500 Q18.500,2.500 20.500,4.800 Q22.500,7 19.500,10 L8.500,20.500 Q5.500,23 2.500,20.500 Q0,17.500 3.500,14 L13,4" fill="none" stroke="#b0b0b0" stroke-width="1.800" stroke-linecap="round"/></svg>
<svg class="abs" style="left:7.5px;top:336px" width="16" height="21" viewBox="0 0 16 21"><path d="M0.500,0.500 H10.500 L15.500,5.500 V20.500 H0.500 Z" fill="#fff" stroke="#777"/><path d="M10.500,0.500 V5.500 H15.500 Z" fill="#777"/><g fill="#3d9df0"><rect x="2.500" y="6" width="2.500" height="2.500"/><rect x="2.500" y="10" width="2.500" height="2.500"/></g><path d="M6.500,7.200 H12.500 M6.500,11.200 H12.500 M2.500,15 H12.500 M2.500,17.500 H12.500" stroke="#3d9df0" stroke-width="1.100"/></svg>
<svg class="abs" style="left:7.5px;top:364px" width="16" height="21" viewBox="0 0 16 21"><path d="M0.500,0.500 H10.500 L15.500,5.500 V20.500 H0.500 Z" fill="#fff" stroke="#777"/><path d="M10.500,0.500 V5.500 H15.500 Z" fill="#777"/><circle cx="6" cy="8" r="3" fill="#f08a78"/><circle cx="6" cy="8" r="1.400" fill="#fbe19a"/><path d="M4,10.500 L3.500,14 L6,12.500 L8.500,14 L8,10.500" fill="#f08a78"/><path d="M10,9 H13 M10,11.500 H13 M3,16.500 H13" stroke="#bbb" stroke-width="1.100"/></svg>
<svg class="abs" style="left:4.0px;top:391.0px" width="22" height="22" viewBox="0 0 22 22"><path d="M11,2 L22,7 L11,12 L0,7 Z" fill="#2a8be6"/><path d="M0,11 L11,16 L22,11 L18.500,9.500 L11,13 L3.500,9.500 Z" fill="#3d9df0"/><path d="M0,15 L11,20 L22,15 L18.500,13.500 L11,17 L3.500,13.500 Z" fill="#5aaef5"/></svg>
<svg class="abs" style="left:7.5px;top:420px" width="16" height="21" viewBox="0 0 16 21"><path d="M0.500,0.500 H10.500 L15.500,5.500 V20.500 H0.500 Z" fill="#fff" stroke="#777"/><path d="M10.500,0.500 V5.500 H15.500 Z" fill="#777"/><rect x="5" y="3" width="5" height="5" fill="#3d9df0"/><circle cx="4.500" cy="8" r="2.800" fill="#f5d04a"/><path d="M7.500,10.500 L10.500,5.500 L13.500,10.500 Z" fill="#6aaa35"/><path d="M2.500,12.500 H7 M4.750,12.500 V17.500 M3.500,17.500 H6" stroke="#555" stroke-width="1.100"/><path d="M8.500,14 H13 M8.500,16.500 H13" stroke="#999"/></svg>
<svg class="abs" style="left:4.0px;top:446.0px" width="22" height="24" viewBox="0 0 22 24"><path d="M13,2 Q20,2 20,9 Q20,13 15,19" fill="none" stroke="#b8b8b8" stroke-width="2.600"/><path d="M8,5.500 Q14.500,5.500 14.500,12 Q14.500,16 8,23 Q1.500,16 1.500,12 Q1.500,5.500 8,5.500 Z" fill="#2a8be6"/><circle cx="8" cy="12" r="2.600" fill="#fff"/></svg>
<svg class="abs" style="left:4.0px;top:475.0px" width="22" height="22" viewBox="0 0 22 22"><path d="M5.500,5 V19.500 H13 M5.500,8 H13 M5.500,13.500 H13" fill="none" stroke="#888" stroke-width="1.200"/><rect x="2.500" y="1" width="5" height="4.500" fill="#3d9df0"/><rect x="2.500" y="1" width="2.200" height="2" fill="#e8533a"/><rect x="13" y="6" width="5" height="4.500" fill="#f5d04a" stroke="#3d9df0" stroke-width="0.800"/><rect x="13" y="11.500" width="5" height="4.500" fill="#f5d04a" stroke="#3d9df0" stroke-width="0.800"/><rect x="13" y="17" width="5" height="4.500" fill="#f5d04a" stroke="#3d9df0" stroke-width="0.800"/></svg>
<svg class="abs" style="left:3.5px;top:503.0px" width="23" height="22" viewBox="0 0 23 22"><g fill="none" stroke-width="3"><rect x="-6.800" y="-3.800" width="13.600" height="7.600" rx="3.800" transform="translate(15.500,7) rotate(-45)" stroke="#b4b4b4"/><rect x="-6.800" y="-3.800" width="13.600" height="7.600" rx="3.800" transform="translate(7.500,15) rotate(-45)" stroke="#f59a23"/></g></svg>
<div class="abs" style="left:3px;top:528.5px;width:25px;height:1px;background:#c8c8c8"></div>
<svg class="abs" style="left:4.0px;top:534.0px" width="22" height="22" viewBox="0 0 22 22"><path d="M10.500,2.500 L19,2.500 Q20.500,2.500 20.500,4 V11.500 L9.500,21 L1.500,12.500 Z" fill="#f8c98a" stroke="#3d9df0" stroke-width="1.600" stroke-linejoin="round"/><circle cx="16.500" cy="6.500" r="1.500" fill="#fff" stroke="#3d9df0"/></svg>
<svg class="abs" style="left:4.0px;top:562.0px" width="22" height="22" viewBox="0 0 22 22"><g fill="#fff" stroke="#3d9df0" stroke-width="1.100"><rect x="1" y="1" width="8" height="6"/><rect x="13" y="1" width="8" height="6"/><rect x="1" y="15" width="8" height="6"/><rect x="13" y="15" width="8" height="6"/></g><path d="M2.500,6.500 H19.500 L2.500,16.500 H19.500" fill="none" stroke="#f5a020" stroke-width="1.800"/><path d="M1,11.500 H21" stroke="#f5a020" stroke-width="1.500"/></svg>
<svg class="abs" style="left:3.0px;top:589.0px" width="24" height="24" viewBox="0 0 24 24"><circle cx="11" cy="11" r="10.300" fill="#fff" stroke="#3d9df0" stroke-width="1.300"/><circle cx="11" cy="4.800" r="1.900" fill="#f5901e"/><path d="M5,8 H17 M11,8 V13 M11,13 L7.500,19 M11,13 L14.500,17" fill="none" stroke="#f5901e" stroke-width="2" stroke-linecap="round"/><circle cx="18" cy="18" r="5" fill="#6aaa35" stroke="#f0f0f0"/><path d="M15.500,18 L17.300,19.800 L20.500,16.500" fill="none" stroke="#fff" stroke-width="1.400"/></svg>
<svg class="abs" style="left:7.5px;top:619px" width="16" height="21" viewBox="0 0 16 21"><path d="M0.500,0.500 H10.500 L15.500,5.500 V20.500 H0.500 Z" fill="#fff" stroke="#777"/><path d="M10.500,0.500 V5.500 H15.500 Z" fill="#777"/><g fill="none" stroke-width="0.900"><rect x="2.500" y="6.500" width="2.200" height="2.200" stroke="#e8533a"/><rect x="2.500" y="10.500" width="2.200" height="2.200" stroke="#6aaa35"/><rect x="2.500" y="14.500" width="2.200" height="2.200" stroke="#f5a020"/></g><path d="M6.500,7.600 H11 M6.500,11.600 H11 M6.500,15.600 H9" stroke="#999"/></svg>
<svg class="abs" style="left:18px;top:627px" width="13" height="13" viewBox="0 0 13 13"><circle cx="6.500" cy="6.500" r="5.800" fill="#fff" stroke="#3d9df0" stroke-width="1.100"/><circle cx="6.500" cy="3.500" r="1.100" fill="#3d9df0"/><path d="M3.500,5.500 H9.500 M6.500,5.500 V8.500 M6.500,8.500 L4.800,11 M6.500,8.500 L8.200,11" stroke="#3d9df0" stroke-width="1.100" fill="none"/></svg>
<div class="abs" style="left:1665px;top:198px;width:15px;height:758px;background:#f0f0f0"></div>
<div class="abs" style="left:1665px;top:198px;width:1px;height:758px;background:#9a9a9a"></div>
<svg class="abs" style="left:1668px;top:202px" width="10" height="8" viewBox="0 0 10 8"><path d="M1.500,6 L5,2.500 L8.500,6" fill="none" stroke="#555" stroke-width="1.300"/></svg>
<svg class="abs" style="left:1668px;top:944px" width="10" height="8" viewBox="0 0 10 8"><path d="M1.500,2 L5,5.500 L8.500,2" fill="none" stroke="#555" stroke-width="1.300"/></svg>
<div class="abs" style="left:1669px;top:643.5px;width:6.5px;height:114.5px;background:#8c8c8c;border-radius:3.200px"></div>
<svg id="sch" width="1633" height="758" viewBox="32 198 1633 758" font-family="'Liberation Serif',serif" letter-spacing="-0.25" style="position:absolute;left:32px;top:198px;background:#fffee6">
<rect x="18.9" y="417.1" width="78.69999999999999" height="19.299999999999955" stroke="#0000ff" stroke-width="3.3" fill="none"/>
<line x1="98" y1="426.7" x2="161" y2="426.7" stroke="#000000" stroke-width="3" stroke-linecap="butt"/>
<rect x="161.4" y="417.1" width="67.19999999999999" height="19.299999999999955" stroke="#0000ff" stroke-width="3.3" fill="none"/>
<line x1="229" y1="426.7" x2="259" y2="426.7" stroke="#000000" stroke-width="3" stroke-linecap="butt"/>
<line x1="259" y1="426.7" x2="586" y2="426.7" stroke="#00008b" stroke-width="3" stroke-linecap="butt"/>
<line x1="586" y1="426.7" x2="616" y2="426.7" stroke="#000000" stroke-width="3" stroke-linecap="butt"/>
<line x1="259.3" y1="426.7" x2="259.3" y2="492.7" stroke="#00008b" stroke-width="3" stroke-linecap="butt"/>
<line x1="259.3" y1="492.7" x2="259.3" y2="523" stroke="#000000" stroke-width="3" stroke-linecap="butt"/>
<rect x="250.1" y="523.4" width="18.799999999999983" height="65.70000000000005" stroke="#0000ff" stroke-width="3.3" fill="none"/>
<line x1="259.3" y1="589.5" x2="259.3" y2="620.7" stroke="#000000" stroke-width="3" stroke-linecap="butt"/>
<polyline points="259.3,620.7 259.3,686.7 373,686.7" stroke="#00008b" stroke-width="3" fill="none" stroke-linejoin="miter"/>
<line x1="373" y1="426.7" x2="373" y2="509.3" stroke="#00008b" stroke-width="3" stroke-linecap="butt"/>
<line x1="373" y1="509.3" x2="373" y2="540" stroke="#000000" stroke-width="3" stroke-linecap="butt"/>
<line x1="373" y1="540" x2="373" y2="551" stroke="#0000ff" stroke-width="3" stroke-linecap="butt"/>
<line x1="343.3" y1="550.7" x2="403.3" y2="550.7" stroke="#0000ff" stroke-width="3" stroke-linecap="butt"/>
<line x1="343.3" y1="563.3" x2="403.3" y2="563.3" stroke="#0000ff" stroke-width="3" stroke-linecap="butt"/>
<line x1="373" y1="563" x2="373" y2="575" stroke="#0000ff" stroke-width="3" stroke-linecap="butt"/>
<line x1="373" y1="575" x2="373" y2="605" stroke="#000000" stroke-width="3" stroke-linecap="butt"/>
<line x1="373" y1="605" x2="373" y2="686.7" stroke="#00008b" stroke-width="3" stroke-linecap="butt"/>
<line x1="373" y1="686.7" x2="403" y2="686.7" stroke="#000000" stroke-width="3" stroke-linecap="butt"/>
<rect x="401" y="653" width="6" height="67.5" fill="#0000ff"/>
<polygon points="404,686.7 439.5,653 439.5,720.5" fill="#0000ff"/>
<line x1="439" y1="686.7" x2="470" y2="686.7" stroke="#000000" stroke-width="3" stroke-linecap="butt"/>
<line x1="470" y1="686.7" x2="519.5" y2="686.7" stroke="#00008b" stroke-width="3" stroke-linecap="butt"/>
<polyline points="617,556.4 519.8,556.4 519.8,947.4 487.7,947.4" stroke="#00008b" stroke-width="3" fill="none" stroke-linejoin="miter"/>
<line x1="586" y1="556.4" x2="617" y2="556.4" stroke="#000000" stroke-width="3" stroke-linecap="butt"/>
<polyline points="617,589.6 551.8,589.6 551.8,768 32,768" stroke="#00008b" stroke-width="3" fill="none" stroke-linejoin="miter"/>
<line x1="586" y1="589.6" x2="617" y2="589.6" stroke="#000000" stroke-width="3" stroke-linecap="butt"/>
<polyline points="617,686.5 584.7,686.5 584.7,849.5" stroke="#00008b" stroke-width="3" fill="none" stroke-linejoin="miter"/>
<line x1="592" y1="686.5" x2="617" y2="686.5" stroke="#000000" stroke-width="3" stroke-linecap="butt"/>
<line x1="30" y1="637.3" x2="49" y2="637.3" stroke="#000000" stroke-width="3" stroke-linecap="butt"/>
<line x1="47.6" y1="636" x2="47.6" y2="768" stroke="#00008b" stroke-width="3" stroke-linecap="butt"/>
<line x1="30" y1="768" x2="40" y2="768" stroke="#000000" stroke-width="3" stroke-linecap="butt"/>
<rect x="601.2" y="410.7" width="97.0" height="291.90000000000003" stroke="#a8503f" stroke-width="1.4" fill="none"/>
<path d="M615.8,426.7 a15.5,16.2 0 0 1 0,32.4 a15.5,16.2 0 0 1 0,32.4 a15.5,16.2 0 0 1 0,32.4 a15.5,16.2 0 0 1 0,32.4" stroke="#0000ff" stroke-width="3" fill="none" stroke-linecap="butt"/>
<path d="M615.8,589.6 a15.5,16.15 0 0 1 0,32.3 a15.5,16.15 0 0 1 0,32.3 a15.5,16.15 0 0 1 0,32.3" stroke="#0000ff" stroke-width="3" fill="none" stroke-linecap="butt"/>
<path d="M683,426.7 a14.5,16.2 0 0 0 0,32.4 a14.5,16.2 0 0 0 0,32.4 a14.5,16.2 0 0 0 0,32.4 a14.5,16.2 0 0 0 0,32.4" stroke="#0000ff" stroke-width="3" fill="none" stroke-linecap="butt"/>
<line x1="643.5" y1="426" x2="643.5" y2="688" stroke="#0000ff" stroke-width="3" stroke-linecap="butt"/>
<line x1="656.5" y1="426" x2="656.5" y2="688" stroke="#0000ff" stroke-width="3" stroke-linecap="butt"/>
<circle cx="682.3" cy="442.7" r="6.8" fill="#800000"/>
<circle cx="617" cy="540.2" r="6.8" fill="#800000"/>
<circle cx="617" cy="604.8" r="6.8" fill="#800000"/>
<line x1="683" y1="426.7" x2="713.3" y2="426.7" stroke="#000000" stroke-width="3" stroke-linecap="butt"/>
<line x1="713.3" y1="426.7" x2="731.7" y2="426.7" stroke="#00008b" stroke-width="3" stroke-linecap="butt"/>
<line x1="731.7" y1="426.7" x2="763" y2="426.7" stroke="#000000" stroke-width="3" stroke-linecap="butt"/>
<polygon points="762.5,393 762.5,461 798,426.7" fill="#0000ff"/>
<rect x="795.3" y="393" width="6" height="68" fill="#0000ff"/>
<line x1="801" y1="426.7" x2="828.3" y2="426.7" stroke="#000000" stroke-width="3" stroke-linecap="butt"/>
<line x1="828.3" y1="426.7" x2="1071.7" y2="426.7" stroke="#00008b" stroke-width="3" stroke-linecap="butt"/>
<line x1="1071.7" y1="426.7" x2="1105" y2="426.7" stroke="#000000" stroke-width="3" stroke-linecap="butt"/>
<line x1="683" y1="556.4" x2="713.3" y2="556.4" stroke="#000000" stroke-width="3" stroke-linecap="butt"/>
<line x1="713.3" y1="556.4" x2="878" y2="556.4" stroke="#00008b" stroke-width="3" stroke-linecap="butt"/>
<polyline points="746.9,556.4 746.9,849.5 715.6,849.5" stroke="#00008b" stroke-width="3" fill="none" stroke-linejoin="miter"/>
<line x1="715.6" y1="849.5" x2="747" y2="849.5" stroke="#000000" stroke-width="3" stroke-linecap="butt"/>
<line x1="878" y1="426.7" x2="878" y2="460.7" stroke="#00008b" stroke-width="3" stroke-linecap="butt"/>
<line x1="878" y1="460.7" x2="878" y2="477.3" stroke="#000000" stroke-width="3" stroke-linecap="butt"/>
<line x1="878" y1="477.3" x2="878" y2="491" stroke="#0000ff" stroke-width="3" stroke-linecap="butt"/>
<rect x="848.5" y="491.8" width="59.0" height="9.399999999999977" stroke="#0000ff" stroke-width="2.4" fill="none"/>
<rect x="847.3" y="513.4" width="61.4" height="12.2" fill="#0000ff"/>
<line x1="885.5" y1="482.3" x2="902.5" y2="482.3" stroke="#0000ff" stroke-width="2.6" stroke-linecap="butt"/>
<line x1="894" y1="474" x2="894" y2="491" stroke="#0000ff" stroke-width="2.6" stroke-linecap="butt"/>
<line x1="878" y1="525" x2="878" y2="556" stroke="#000000" stroke-width="3" stroke-linecap="butt"/>
<line x1="878" y1="556" x2="878" y2="589.6" stroke="#800000" stroke-width="3" stroke-linecap="butt"/>
<line x1="844.4" y1="589.6" x2="911.5" y2="589.6" stroke="#800000" stroke-width="3" stroke-linecap="butt"/>
<line x1="845.5" y1="589.6" x2="829.0" y2="622.5" stroke="#800000" stroke-width="3" stroke-linecap="round"/>
<line x1="878" y1="589.6" x2="861.5" y2="622.5" stroke="#800000" stroke-width="3" stroke-linecap="round"/>
<line x1="910.5" y1="589.6" x2="894.0" y2="622.5" stroke="#800000" stroke-width="3" stroke-linecap="round"/>
<line x1="1007.4" y1="394" x2="1007.4" y2="426.7" stroke="#800000" stroke-width="3" stroke-linecap="butt"/>
<line x1="990.7" y1="394" x2="1025" y2="394" stroke="#800000" stroke-width="3" stroke-linecap="butt"/>
<line x1="1007.4" y1="426.7" x2="1007.4" y2="460" stroke="#000000" stroke-width="3" stroke-linecap="butt"/>
<rect x="998.2" y="459.4" width="19.59999999999991" height="64.20000000000005" stroke="#0000ff" stroke-width="3.3" fill="none"/>
<line x1="1007.4" y1="524" x2="1007.4" y2="556" stroke="#000000" stroke-width="3" stroke-linecap="butt"/>
<line x1="1007.4" y1="556" x2="1007.4" y2="590" stroke="#000000" stroke-width="3" stroke-linecap="butt"/>
<polyline points="1007.4,556.7 1105.3,556.7 1105.3,589" stroke="#00008b" stroke-width="3" fill="none" stroke-linejoin="miter"/>
<line x1="1105.3" y1="589" x2="1105.3" y2="622" stroke="#000000" stroke-width="3" stroke-linecap="butt"/>
<rect x="1096.1" y="622.1999999999999" width="18.800000000000182" height="64.50000000000011" stroke="#0000ff" stroke-width="3.3" fill="none"/>
<line x1="1105.3" y1="687" x2="1105.3" y2="719" stroke="#000000" stroke-width="3" stroke-linecap="butt"/>
<line x1="1105.3" y1="719" x2="1105.3" y2="751.8" stroke="#00008b" stroke-width="3" stroke-linecap="butt"/>
<polyline points="1063.8,602.4 971.8,602.4 971.8,706.7 1063.8,706.7" stroke="#0000ff" stroke-width="3" fill="none" stroke-linejoin="miter"/>
<line x1="1007.4" y1="586.3" x2="1007.4" y2="722" stroke="#0000ff" stroke-width="3" stroke-linecap="butt"/>
<polygon points="980.1,637.5 1034.7,637.5 1007.4,666.3" fill="#0000ff"/>
<rect x="980.1" y="665.3" width="54.6" height="6.3" fill="#0000ff"/>
<line x1="1042.9" y1="644.2" x2="1063.7" y2="665.0" stroke="#0000ff" stroke-width="2.9" stroke-linecap="round"/>
<polygon points="1064.7,653.7 1064.7,666.0 1052.4,666.0" fill="#0000ff"/>
<line x1="1042.9" y1="660.0" x2="1063.7" y2="680.8" stroke="#0000ff" stroke-width="2.9" stroke-linecap="round"/>
<polygon points="1064.7,669.5 1064.7,681.8 1052.4,681.8" fill="#0000ff"/>
<line x1="1007.4" y1="722" x2="1007.4" y2="742" stroke="#000000" stroke-width="3" stroke-linecap="butt"/>
<line x1="1007.4" y1="751.8" x2="1105.3" y2="751.8" stroke="#00008b" stroke-width="3" stroke-linecap="butt"/>
<line x1="1105" y1="751.8" x2="1137" y2="751.8" stroke="#000000" stroke-width="3" stroke-linecap="butt"/>
<line x1="1137" y1="751.8" x2="1148" y2="751.8" stroke="#0000ff" stroke-width="3" stroke-linecap="butt"/>
<line x1="1147.8" y1="722" x2="1147.8" y2="782" stroke="#0000ff" stroke-width="3" stroke-linecap="butt"/>
<line x1="1160.8" y1="722" x2="1160.8" y2="782" stroke="#0000ff" stroke-width="3" stroke-linecap="butt"/>
<line x1="1160.8" y1="751.8" x2="1171.3" y2="751.8" stroke="#0000ff" stroke-width="3" stroke-linecap="butt"/>
<line x1="1171.3" y1="751.8" x2="1236" y2="751.8" stroke="#000000" stroke-width="3" stroke-linecap="butt"/>
<rect x="1235.9" y="742.6" width="63.99999999999977" height="18.799999999999955" stroke="#0000ff" stroke-width="3.3" fill="none"/>
<line x1="1301.5" y1="751.8" x2="1333" y2="751.8" stroke="#000000" stroke-width="3" stroke-linecap="butt"/>
<line x1="1007.4" y1="751.8" x2="1007.4" y2="817.3" stroke="#00008b" stroke-width="3" stroke-linecap="butt"/>
<line x1="1007.4" y1="817.3" x2="1007.4" y2="845" stroke="#000000" stroke-width="3" stroke-linecap="butt"/>
<rect x="974" y="844.8" width="67.8" height="6.5" fill="#0000ff"/>
<polygon points="1007.6,850 974,903 1041.8,903" fill="#0000ff"/>
<line x1="1007.4" y1="903" x2="1007.4" y2="915" stroke="#0000ff" stroke-width="3" stroke-linecap="butt"/>
<line x1="1007.4" y1="915" x2="1007.4" y2="947" stroke="#000000" stroke-width="3" stroke-linecap="butt"/>
<line x1="1007.4" y1="947" x2="1007.4" y2="960" stroke="#00008b" stroke-width="3" stroke-linecap="butt"/>
<line x1="1029" y1="882.2" x2="1071.8" y2="882.2" stroke="#000000" stroke-width="3" stroke-linecap="butt"/>
<line x1="1071.8" y1="882.2" x2="1333" y2="882.2" stroke="#00008b" stroke-width="3" stroke-linecap="butt"/>
<polyline points="1333,329.3 1333,556.6" stroke="#00008b" stroke-width="3" fill="none" stroke-linejoin="miter"/>
<line x1="1333" y1="556.6" x2="1333" y2="589" stroke="#000000" stroke-width="3" stroke-linecap="butt"/>
<rect x="1323.3999999999999" y="589.3" width="19.40000000000032" height="65.40000000000009" stroke="#0000ff" stroke-width="3.3" fill="none"/>
<line x1="1333" y1="655" x2="1333" y2="685.8" stroke="#000000" stroke-width="3" stroke-linecap="butt"/>
<line x1="1333" y1="685.8" x2="1333" y2="882" stroke="#00008b" stroke-width="3" stroke-linecap="butt"/>
<line x1="1333" y1="882" x2="1333" y2="914" stroke="#000000" stroke-width="3" stroke-linecap="butt"/>
<rect x="1323.5" y="914.5" width="19.700000000000045" height="46.60000000000002" stroke="#0000ff" stroke-width="3.3" fill="none"/>
<line x1="1104.7" y1="401" x2="1203.8" y2="401" stroke="#0000ff" stroke-width="3" stroke-linecap="round"/>
<line x1="1170" y1="426.7" x2="1204" y2="426.7" stroke="#00008b" stroke-width="3" stroke-linecap="butt"/>
<line x1="1204" y1="426.7" x2="1236.5" y2="426.7" stroke="#000000" stroke-width="3" stroke-linecap="butt"/>
<line x1="1236.5" y1="426.7" x2="1333" y2="426.7" stroke="#00008b" stroke-width="3" stroke-linecap="butt"/>
<path d="M1104.7,428 a16.5,14.6 0 0 1 33,0 a16.5,14.6 0 0 1 33,0 a16.5,14.6 0 0 1 33,0" stroke="#0000ff" stroke-width="3" fill="none" stroke-linecap="butt"/>
<polygon points="1333.6,329.3 1349.3,312.7 1447.3,312.7 1463.3,329.3 1447.3,345.7 1349.3,345.7" fill="#ffff8c" stroke="#800000" stroke-width="1.2"/>
<rect x="1144.3" y="199.6" width="19.700000000000045" height="64.30000000000004" stroke="#0000ff" stroke-width="3.3" fill="none"/>
<line x1="1154" y1="265" x2="1154" y2="296.7" stroke="#000000" stroke-width="3" stroke-linecap="butt"/>
<line x1="1154" y1="296.7" x2="1154" y2="329.2" stroke="#800000" stroke-width="3" stroke-linecap="butt"/>
<line x1="1122.0" y1="329.2" x2="1187.0" y2="329.2" stroke="#800000" stroke-width="3" stroke-linecap="round"/>
<line x1="1131.3" y1="339" x2="1177.0" y2="339" stroke="#800000" stroke-width="3" stroke-linecap="round"/>
<line x1="1141.3" y1="348.8" x2="1168.0" y2="348.8" stroke="#800000" stroke-width="3" stroke-linecap="round"/>
<line x1="1151.3" y1="358.8" x2="1157.0" y2="358.8" stroke="#800000" stroke-width="3" stroke-linecap="round"/>
<line x1="1527" y1="199.4" x2="1665" y2="199.4" stroke="#00008b" stroke-width="3.2" stroke-linecap="butt"/>
<circle cx="1625.7" cy="199" r="10" fill="#800000"/>
<line x1="1479.6" y1="443.3" x2="1512.0" y2="443.3" stroke="#800000" stroke-width="3" stroke-linecap="round"/>
<line x1="1495.4" y1="443.3" x2="1495.4" y2="475" stroke="#800000" stroke-width="3" stroke-linecap="butt"/>
<line x1="1495.4" y1="475" x2="1495.4" y2="508" stroke="#000000" stroke-width="3" stroke-linecap="butt"/>
<rect x="1486.0" y="508.09999999999997" width="19.40000000000009" height="65.00000000000006" stroke="#0000ff" stroke-width="3.3" fill="none"/>
<line x1="1495.4" y1="573.5" x2="1495.4" y2="636" stroke="#000000" stroke-width="3" stroke-linecap="butt"/>
<polyline points="1495.4,605.1 1593.4,605.1 1593.4,637" stroke="#00008b" stroke-width="3" fill="none" stroke-linejoin="miter"/>
<line x1="1593.4" y1="613" x2="1593.4" y2="637" stroke="#000000" stroke-width="3" stroke-linecap="butt"/>
<rect x="1584.0" y="637.3" width="19.40000000000009" height="65.80000000000007" stroke="#0000ff" stroke-width="3.3" fill="none"/>
<line x1="1593.4" y1="703.4" x2="1593.4" y2="735.3" stroke="#000000" stroke-width="3" stroke-linecap="butt"/>
<line x1="1593.4" y1="735.3" x2="1593.4" y2="848.7" stroke="#00008b" stroke-width="3" stroke-linecap="butt"/>
<line x1="1593.4" y1="768" x2="1659" y2="768" stroke="#00008b" stroke-width="3" stroke-linecap="butt"/>
<line x1="1659" y1="768" x2="1670" y2="768" stroke="#000000" stroke-width="3" stroke-linecap="butt"/>
<polyline points="1552,651.3 1459.5,651.3 1459.5,754.4 1552,754.4" stroke="#0000ff" stroke-width="3" fill="none" stroke-linejoin="miter"/>
<line x1="1495.4" y1="634.8" x2="1495.4" y2="772" stroke="#0000ff" stroke-width="3" stroke-linecap="butt"/>
<polygon points="1468.1000000000001,686.4 1522.7,686.4 1495.4,715.6" fill="#0000ff"/>
<rect x="1468.1000000000001" y="714.6" width="54.6" height="6.3" fill="#0000ff"/>
<line x1="1530.9" y1="693.1" x2="1551.7" y2="713.9" stroke="#0000ff" stroke-width="2.9" stroke-linecap="round"/>
<polygon points="1552.7,702.6 1552.7,714.9 1540.4,714.9" fill="#0000ff"/>
<line x1="1530.9" y1="708.9" x2="1551.7" y2="729.6999999999999" stroke="#0000ff" stroke-width="2.9" stroke-linecap="round"/>
<polygon points="1552.7,718.4 1552.7,730.6999999999999 1540.4,730.6999999999999" fill="#0000ff"/>
<line x1="1495.4" y1="772" x2="1495.4" y2="800" stroke="#000000" stroke-width="3" stroke-linecap="butt"/>
<line x1="1495.4" y1="800" x2="1495.4" y2="866" stroke="#00008b" stroke-width="3" stroke-linecap="butt"/>
<line x1="1495.4" y1="866" x2="1495.4" y2="895" stroke="#000000" stroke-width="3" stroke-linecap="butt"/>
<line x1="1495.4" y1="848.7" x2="1603" y2="848.7" stroke="#00008b" stroke-width="3" stroke-linecap="butt"/>
<line x1="1603" y1="848.7" x2="1625" y2="848.7" stroke="#000000" stroke-width="3" stroke-linecap="butt"/>
<rect x="1625.3000000000002" y="840.0" width="55.79999999999973" height="19.399999999999977" stroke="#0000ff" stroke-width="3.3" fill="none"/>
<rect x="1461.8" y="894" width="68.2" height="6" fill="#0000ff"/>
<polygon points="1495.6,898.5 1461.8,951 1530,951" fill="#0000ff"/>
<line x1="1495.4" y1="950" x2="1495.4" y2="960" stroke="#0000ff" stroke-width="3" stroke-linecap="butt"/>
<line x1="1517" y1="930.4" x2="1560" y2="930.4" stroke="#000000" stroke-width="3" stroke-linecap="butt"/>
<line x1="1560" y1="930.4" x2="1670" y2="930.4" stroke="#00008b" stroke-width="3" stroke-linecap="butt"/>
<path d="M227.3,960 V816.8 H292 a32.4,32.4 0 0 0 64.8,0 H422.2 V960" stroke="#ffff00" stroke-width="3" fill="none" stroke-linecap="butt"/>
<line x1="162.4" y1="849.5" x2="226" y2="849.5" stroke="#000000" stroke-width="3" stroke-linecap="butt"/>
<line x1="423.5" y1="849.5" x2="487.7" y2="849.5" stroke="#000000" stroke-width="3" stroke-linecap="butt"/>
<line x1="162.4" y1="882.5" x2="226" y2="882.5" stroke="#000000" stroke-width="3" stroke-linecap="butt"/>
<line x1="423.5" y1="882.5" x2="487.7" y2="882.5" stroke="#000000" stroke-width="3" stroke-linecap="butt"/>
<line x1="162.4" y1="914.2" x2="226" y2="914.2" stroke="#000000" stroke-width="3" stroke-linecap="butt"/>
<line x1="423.5" y1="914.2" x2="487.7" y2="914.2" stroke="#000000" stroke-width="3" stroke-linecap="butt"/>
<line x1="162.4" y1="947.4" x2="226" y2="947.4" stroke="#000000" stroke-width="3" stroke-linecap="butt"/>
<line x1="423.5" y1="947.4" x2="487.7" y2="947.4" stroke="#000000" stroke-width="3" stroke-linecap="butt"/>
<line x1="32" y1="849.5" x2="162.4" y2="849.5" stroke="#00008b" stroke-width="3" stroke-linecap="butt"/>
<polyline points="162.4,882.5 96.3,882.5 96.3,960" stroke="#00008b" stroke-width="3" fill="none" stroke-linejoin="miter"/>
<line x1="96.3" y1="914.2" x2="162.4" y2="914.2" stroke="#00008b" stroke-width="3" stroke-linecap="butt"/>
<polyline points="162.4,946 162.4,960" stroke="#00008b" stroke-width="3" fill="none" stroke-linejoin="miter"/>
<line x1="487.7" y1="849.5" x2="651.4" y2="849.5" stroke="#00008b" stroke-width="3" stroke-linecap="butt"/>
<line x1="651.4" y1="849.5" x2="683" y2="849.5" stroke="#000000" stroke-width="3" stroke-linecap="butt"/>
<line x1="683" y1="849.5" x2="693" y2="849.5" stroke="#0000ff" stroke-width="3" stroke-linecap="butt"/>
<line x1="692.6" y1="819" x2="692.6" y2="880" stroke="#0000ff" stroke-width="3" stroke-linecap="butt"/>
<line x1="705.1" y1="819" x2="705.1" y2="880" stroke="#0000ff" stroke-width="3" stroke-linecap="butt"/>
<line x1="705" y1="849.5" x2="715.6" y2="849.5" stroke="#0000ff" stroke-width="3" stroke-linecap="butt"/>
<line x1="584.7" y1="849.5" x2="584.7" y2="882.2" stroke="#800000" stroke-width="3" stroke-linecap="butt"/>
<line x1="552.3" y1="882.2" x2="616.9000000000001" y2="882.2" stroke="#800000" stroke-width="3" stroke-linecap="round"/>
<line x1="562.3" y1="892" x2="607.4000000000001" y2="892" stroke="#800000" stroke-width="3" stroke-linecap="round"/>
<line x1="571.5" y1="901.6" x2="597.7" y2="901.6" stroke="#800000" stroke-width="3" stroke-linecap="round"/>
<line x1="581.3" y1="911.6" x2="587.7" y2="911.6" stroke="#800000" stroke-width="3" stroke-linecap="round"/>
<polygon points="650,297 617.8,345.5 682.8,345.5" fill="none" stroke="#0000ff" stroke-width="2.8" stroke-linejoin="round"/>
<line x1="650" y1="311.7" x2="650" y2="331" stroke="#0000ff" stroke-width="2.8" stroke-linecap="butt"/>
<circle cx="650" cy="335.7" r="3.3" fill="#fff" stroke="#ff0000" stroke-width="1.8"/>
<circle cx="259.3" cy="426.7" r="10" fill="#800000"/>
<circle cx="373" cy="426.7" r="10" fill="#800000"/>
<circle cx="373" cy="686.7" r="10" fill="#800000"/>
<circle cx="519.5" cy="686.7" r="10" fill="#800000"/>
<circle cx="47.3" cy="768" r="10" fill="#800000"/>
<circle cx="878" cy="426.7" r="10" fill="#800000"/>
<circle cx="1007.4" cy="426.7" r="10" fill="#800000"/>
<circle cx="1333" cy="426.7" r="10" fill="#800000"/>
<circle cx="746.9" cy="556.4" r="10" fill="#800000"/>
<circle cx="878" cy="556.4" r="10" fill="#800000"/>
<circle cx="1007.4" cy="556.7" r="10" fill="#800000"/>
<circle cx="1007.4" cy="751.8" r="10" fill="#800000"/>
<circle cx="1105.2" cy="751.8" r="10" fill="#800000"/>
<circle cx="1333" cy="751.8" r="10" fill="#800000"/>
<circle cx="1333" cy="882" r="10" fill="#800000"/>
<circle cx="584.7" cy="849.5" r="10" fill="#800000"/>
<circle cx="1495.4" cy="605.1" r="10" fill="#800000"/>
<circle cx="1593.4" cy="768" r="10" fill="#800000"/>
<circle cx="1495.4" cy="848.7" r="10" fill="#800000"/>
<circle cx="1593.4" cy="848.7" r="10" fill="#800000"/>
<circle cx="96.4" cy="914.2" r="6.8" fill="#800000"/>
<text x="15.4" y="361.4" fill="#000080" font-size="29.2">R66D</text>
<text x="15" y="397.4" fill="#000080" font-size="29.2">10R</text>
<text x="161" y="361.4" fill="#000080" font-size="29.2">R66E</text>
<text x="162" y="397.4" fill="#000080" font-size="29.2">10R</text>
<text x="170.7" y="550.0" fill="#000080" font-size="29.2">R69</text>
<text x="172.3" y="583.4" fill="#000080" font-size="29.2">100K</text>
<text x="405.7" y="563.0" fill="#000080" font-size="29.2">C44</text>
<text x="407.3" y="595.7" fill="#000080" font-size="29.2">102/1KV</text>
<text x="467.3" y="647.4" fill="#000080" font-size="29.2">D29</text>
<text x="402.3" y="745.0" fill="#000080" font-size="29.2">HER107</text>
<text x="226.9" y="810.7" fill="#000080" font-size="29.2">IC6</text>
<text x="291" y="810.7" fill="#000080" font-size="29.2">NCP1013</text>
<text x="551.5" y="371.7" fill="#000080" font-size="29.2">T3</text>
<text x="551.5" y="403.4" fill="#000080" font-size="29.2">EE19</text>
<text x="796.3" y="355.0" fill="#000080" font-size="29.2">D30</text>
<text x="796.3" y="388.4" fill="#000080" font-size="29.2">SR360</text>
<text x="763.3" y="514.7" fill="#000080" font-size="29.2">C45</text>
<text x="733" y="550.7" fill="#000080" font-size="29.2">1000UF/16V</text>
<text x="1018.6" y="484.9" fill="#000080" font-size="29.2">R76</text>
<text x="1019.3" y="517.5" fill="#000080" font-size="29.2">1K</text>
<text x="1115.3" y="648.0" fill="#000080" font-size="29.2">R77</text>
<text x="1117.5" y="680.0" fill="#000080" font-size="29.2">1K</text>
<text x="903.7" y="703.4" fill="#000080" font-size="29.2">IC7A</text>
<text x="887.6" y="734.8" fill="#000080" font-size="29.2">PC123</text>
<text x="1101.7" y="810.7" fill="#000080" font-size="29.2">C49</text>
<text x="1103.5" y="843.4" fill="#000080" font-size="29.2">103</text>
<text x="1218.8" y="801.5" fill="#000080" font-size="29.2">R78</text>
<text x="1221.4" y="836.3" fill="#000080" font-size="29.2">10K</text>
<text x="909.7" y="882.1" fill="#000080" font-size="29.2">IC8</text>
<text x="878.3" y="910.9" fill="#000080" font-size="29.2">TL431</text>
<text x="679.2" y="924.0" fill="#000080" font-size="29.2">CY4</text>
<text x="649" y="956.3" fill="#000080" font-size="29.2">102M/400VAC</text>
<text x="1164" y="224.7" fill="#000080" font-size="29.2">R18</text>
<text x="1164" y="258.4" fill="#000080" font-size="29.2">0.25R/5W</text>
<text x="1102.2" y="391.4" fill="#000080" font-size="29.2">L7</text>
<text x="1168.7" y="384.7" fill="#000080" font-size="29.2">10UH</text>
<text x="1521.4" y="533.3" fill="#000080" font-size="29.2">R25</text>
<text x="1521.4" y="566.2" fill="#000080" font-size="29.2">680</text>
<text x="1392" y="606.7" fill="#000080" font-size="29.2">IC3A</text>
<text x="1392" y="638.7" fill="#000080" font-size="29.2">PC123</text>
<text x="1244.7" y="615.4" fill="#000080" font-size="29.2">R74</text>
<text x="1247" y="648.2" fill="#000080" font-size="29.2">1K</text>
<text x="1619.7" y="664.2" fill="#000080" font-size="29.2">R26</text>
<text x="1621.7" y="696.1" fill="#000080" font-size="29.2">1K</text>
<text x="1625.3" y="801.5" fill="#000080" font-size="29.2">R32</text>
<text x="1625.3" y="836.3" fill="#000080" font-size="29.2">33K</text>
<text x="1343.8" y="939.7" fill="#000080" font-size="29.2">R75</text>
<text x="1346" y="973.1" fill="#000080" font-size="29.2">1K</text>
<text x="165.3" y="843.4" fill="#000" font-size="29.2">1</text>
<text x="165.3" y="876.4" fill="#000" font-size="29.2">2</text>
<text x="165.3" y="907.7" fill="#000" font-size="29.2">3</text>
<text x="165.3" y="940.3" fill="#000" font-size="29.2">4</text>
<text x="471" y="842.3" fill="#000" font-size="29.2">8</text>
<text x="471" y="876.4" fill="#000" font-size="29.2">7</text>
<text x="471" y="907.5" fill="#000" font-size="29.2">6</text>
<text x="471" y="939.7" fill="#000" font-size="29.2">5</text>
<text x="965" y="388.0" fill="#800000" font-size="29.2">+5VSB</text>
<text x="1366.2" y="339.5" fill="#800000" font-size="29.2">+5VSB</text>
<text x="1462.3" y="436.4" fill="#800000" font-size="29.2">+V12</text>
</svg>
<div class="abs" style="left:32px;top:956px;width:1648px;height:14px;background:#f0f0f0"></div>
<svg class="abs" style="left:34px;top:959px" width="9" height="9" viewBox="0 0 9 9"><path d="M6,1.500 L2.500,4.500 L6,7.500" fill="none" stroke="#444" stroke-width="1.300"/></svg>
<svg class="abs" style="left:1653px;top:959px" width="9" height="9" viewBox="0 0 9 9"><path d="M3,1.500 L6.500,4.500 L3,7.500" fill="none" stroke="#444" stroke-width="1.300"/></svg>
<div class="abs" style="left:501px;top:960.5px;width:389px;height:4.5px;background:#8c8c8c;border-radius:2.300px"></div>
<div class="abs" style="left:32px;top:955px;width:1633px;height:1px;background:#8a8a8a"></div>
<div class="abs" style="left:32px;top:970px;width:1648px;height:33px;background:#f4f4f4"></div>
<div class="abs" style="left:0px;top:1002px;width:1680px;height:1px;background:#c6c6c6"></div>
<div class="abs" style="left:0px;top:1003px;width:1680px;height:47px;background:#f3f3f3"></div>
<svg class="abs" style="left:33px;top:974px" width="9" height="17" viewBox="0 0 9 17"><g fill="#a8a8a8"><rect x="0" y="0" width="1" height="1"/><rect x="0" y="2" width="1" height="1"/><rect x="0" y="4" width="1" height="1"/><rect x="0" y="6" width="1" height="1"/><rect x="0" y="8" width="1" height="1"/><rect x="0" y="10" width="1" height="1"/><rect x="0" y="12" width="1" height="1"/><rect x="0" y="14" width="1" height="1"/><rect x="2" y="0" width="1" height="1"/><rect x="2" y="2" width="1" height="1"/><rect x="2" y="4" width="1" height="1"/><rect x="2" y="6" width="1" height="1"/><rect x="2" y="8" width="1" height="1"/><rect x="2" y="10" width="1" height="1"/><rect x="2" y="12" width="1" height="1"/><rect x="2" y="14" width="1" height="1"/><rect x="4" y="0" width="1" height="1"/><rect x="4" y="2" width="1" height="1"/><rect x="4" y="4" width="1" height="1"/><rect x="4" y="6" width="1" height="1"/><rect x="4" y="8" width="1" height="1"/><rect x="4" y="10" width="1" height="1"/><rect x="4" y="12" width="1" height="1"/><rect x="4" y="14" width="1" height="1"/><rect x="6" y="0" width="1" height="1"/><rect x="6" y="2" width="1" height="1"/><rect x="6" y="4" width="1" height="1"/><rect x="6" y="6" width="1" height="1"/><rect x="6" y="8" width="1" height="1"/><rect x="6" y="10" width="1" height="1"/><rect x="6" y="12" width="1" height="1"/><rect x="6" y="14" width="1" height="1"/></g></svg>
<svg class="abs" style="left:33px;top:991px" width="9" height="9" viewBox="0 0 9 9"><path d="M1.500,1 V8 M7.500,1 L3.500,4.500 L7.500,8" fill="none" stroke="#333" stroke-width="1.200"/></svg>
<svg class="abs" style="left:44px;top:973px" width="26" height="27" viewBox="0 0 26 27"><circle cx="9" cy="9" r="5.8" fill="none" stroke="#909090" stroke-width="5.22" stroke-dasharray="3.02 1.54"/><circle cx="9" cy="9" r="4.18" fill="#f4f4f4" stroke="#909090" stroke-width="2.61"/><circle cx="17.5" cy="18.5" r="5" fill="none" stroke="#f5a33a" stroke-width="4.50" stroke-dasharray="2.60 1.33"/><circle cx="17.5" cy="18.5" r="3.60" fill="#f4f4f4" stroke="#f5a33a" stroke-width="2.25"/></svg>
<span class="t" style="left:72.0px;top:979.5px;font-size:12px;line-height:14px;color:#000;letter-spacing:-0.26px;">Seçenekler...</span>
<svg class="abs" style="left:141px;top:982px" width="10" height="8" viewBox="0 0 10 8"><path d="M2.2,2.6 L5,5.4 L7.8,2.6" fill="none" stroke="#222" stroke-width="1.4"/></svg>
<div class="abs" style="left:153.5px;top:973px;width:1px;height:27px;background:#c8c8c8"></div>
<svg class="abs" style="left:158px;top:976px" width="17" height="22" viewBox="0 0 17 22"><path d="M3.500,18 V4.500 H13" fill="none" stroke="#555" stroke-width="1.100"/><path d="M16,4.500 l-4,-2.800 v5.600 z M3.500,21 l-2.800,-4 h5.600 z" fill="#555"/><path d="M6,19.500 H14.500 V8" fill="none" stroke="#777" stroke-width="1" stroke-dasharray="1 1"/></svg>
<span class="t" style="left:175.0px;top:973.5px;font-size:12px;line-height:14px;color:#000;letter-spacing:0.12px;">W: 297,0mm</span>
<span class="t" style="left:175.5px;top:986.5px;font-size:12px;line-height:14px;color:#000;letter-spacing:0.26px;">H: 210,0mm</span>
<div class="abs" style="left:247.5px;top:975px;width:1px;height:23px;background:#c8c8c8"></div>
<svg class="abs" style="left:251px;top:979px" width="16" height="17" viewBox="0 0 16 17"><path d="M7,0.500 V13.500 M0.500,7 H13.500" stroke="#444" stroke-width="1.100"/><path d="M9,9 L15.500,11.500 L12.500,12.500 L11.500,15.500 Z" fill="#444"/></svg>
<span class="t" style="left:270.0px;top:973.5px;font-size:12px;line-height:14px;color:#000;letter-spacing:-0.09px;">X : 134,3mm</span>
<span class="t" style="left:270.0px;top:986.5px;font-size:12px;line-height:14px;color:#000;letter-spacing:-0.07px;">Y : 147,1mm</span>
<svg class="abs" style="left:713px;top:974px" width="9" height="17" viewBox="0 0 9 17"><g fill="#a8a8a8"><rect x="0" y="0" width="1" height="1"/><rect x="0" y="2" width="1" height="1"/><rect x="0" y="4" width="1" height="1"/><rect x="0" y="6" width="1" height="1"/><rect x="0" y="8" width="1" height="1"/><rect x="0" y="10" width="1" height="1"/><rect x="0" y="12" width="1" height="1"/><rect x="0" y="14" width="1" height="1"/><rect x="2" y="0" width="1" height="1"/><rect x="2" y="2" width="1" height="1"/><rect x="2" y="4" width="1" height="1"/><rect x="2" y="6" width="1" height="1"/><rect x="2" y="8" width="1" height="1"/><rect x="2" y="10" width="1" height="1"/><rect x="2" y="12" width="1" height="1"/><rect x="2" y="14" width="1" height="1"/><rect x="4" y="0" width="1" height="1"/><rect x="4" y="2" width="1" height="1"/><rect x="4" y="4" width="1" height="1"/><rect x="4" y="6" width="1" height="1"/><rect x="4" y="8" width="1" height="1"/><rect x="4" y="10" width="1" height="1"/><rect x="4" y="12" width="1" height="1"/><rect x="4" y="14" width="1" height="1"/><rect x="6" y="0" width="1" height="1"/><rect x="6" y="2" width="1" height="1"/><rect x="6" y="4" width="1" height="1"/><rect x="6" y="6" width="1" height="1"/><rect x="6" y="8" width="1" height="1"/><rect x="6" y="10" width="1" height="1"/><rect x="6" y="12" width="1" height="1"/><rect x="6" y="14" width="1" height="1"/></g></svg>
<svg class="abs" style="left:713px;top:991px" width="9" height="9" viewBox="0 0 9 9"><path d="M1.500,1 V8 M7.500,1 L3.500,4.500 L7.500,8" fill="none" stroke="#333" stroke-width="1.200"/></svg>
<svg class="abs" style="left:726.5px;top:976px" width="21" height="21" viewBox="0 0 21 21"><circle cx="10.500" cy="10.500" r="9.800" fill="#f8f8f8" stroke="#c4c4c4" stroke-width="1"/><g fill="none" stroke="#8cc4f5" stroke-width="1.500"><path d="M6.500,6 V15 M14.500,6 L9.500,10.500 L14.500,15"/></g></svg>
<svg class="abs" style="left:754.0px;top:976px" width="21" height="21" viewBox="0 0 21 21"><circle cx="10.500" cy="10.500" r="9.800" fill="#f8f8f8" stroke="#c4c4c4" stroke-width="1"/><g fill="none" stroke="#8cc4f5" stroke-width="1.500"><path d="M12.500,6 L7.500,10.500 L12.500,15"/></g></svg>
<div class="abs" style="left:781px;top:975.5px;width:88px;height:22px;background:#fff;border:1px solid #bdbdbd;border-radius:3px"></div>
<span class="t" style="left:846.0px;top:979.5px;font-size:12px;line-height:14px;color:#000;letter-spacing:1.11px;">1/1</span>
<svg class="abs" style="left:874.5px;top:976px" width="21" height="21" viewBox="0 0 21 21"><circle cx="10.500" cy="10.500" r="9.800" fill="#f8f8f8" stroke="#c4c4c4" stroke-width="1"/><g fill="none" stroke="#8cc4f5" stroke-width="1.500"><path d="M8.500,6 L13.500,10.500 L8.500,15"/></g></svg>
<svg class="abs" style="left:902.0px;top:976px" width="21" height="21" viewBox="0 0 21 21"><circle cx="10.500" cy="10.500" r="9.800" fill="#f8f8f8" stroke="#c4c4c4" stroke-width="1"/><g fill="none" stroke="#8cc4f5" stroke-width="1.500"><path d="M14.500,6 V15 M6.500,6 L11.500,10.500 L6.500,15"/></g></svg>
<div class="abs" style="left:928.5px;top:973px;width:1px;height:27px;background:#c8c8c8"></div>
<svg class="abs" style="left:934.5px;top:976px" width="21" height="21" viewBox="0 0 21 21"><circle cx="10.500" cy="10.500" r="9.800" fill="#f8f8f8" stroke="#8a8a8a" stroke-width="1"/><g fill="none" stroke="#6aaa35" stroke-width="1.500"><path d="M15.500,10.500 H5.500 M9.500,6.500 L5.500,10.500 L9.500,14.500"/></g></svg>
<svg class="abs" style="left:962.5px;top:976px" width="21" height="21" viewBox="0 0 21 21"><circle cx="10.500" cy="10.500" r="9.800" fill="#f8f8f8" stroke="#c4c4c4" stroke-width="1"/><g fill="none" stroke="#a9cf8a" stroke-width="1.500"><path d="M5.500,10.500 H15.500 M11.500,6.500 L15.500,10.500 L11.500,14.500"/></g></svg>
<svg class="abs" style="left:1232px;top:974px" width="9" height="17" viewBox="0 0 9 17"><g fill="#a8a8a8"><rect x="0" y="0" width="1" height="1"/><rect x="0" y="2" width="1" height="1"/><rect x="0" y="4" width="1" height="1"/><rect x="0" y="6" width="1" height="1"/><rect x="0" y="8" width="1" height="1"/><rect x="0" y="10" width="1" height="1"/><rect x="0" y="12" width="1" height="1"/><rect x="0" y="14" width="1" height="1"/><rect x="2" y="0" width="1" height="1"/><rect x="2" y="2" width="1" height="1"/><rect x="2" y="4" width="1" height="1"/><rect x="2" y="6" width="1" height="1"/><rect x="2" y="8" width="1" height="1"/><rect x="2" y="10" width="1" height="1"/><rect x="2" y="12" width="1" height="1"/><rect x="2" y="14" width="1" height="1"/><rect x="4" y="0" width="1" height="1"/><rect x="4" y="2" width="1" height="1"/><rect x="4" y="4" width="1" height="1"/><rect x="4" y="6" width="1" height="1"/><rect x="4" y="8" width="1" height="1"/><rect x="4" y="10" width="1" height="1"/><rect x="4" y="12" width="1" height="1"/><rect x="4" y="14" width="1" height="1"/><rect x="6" y="0" width="1" height="1"/><rect x="6" y="2" width="1" height="1"/><rect x="6" y="4" width="1" height="1"/><rect x="6" y="6" width="1" height="1"/><rect x="6" y="8" width="1" height="1"/><rect x="6" y="10" width="1" height="1"/><rect x="6" y="12" width="1" height="1"/><rect x="6" y="14" width="1" height="1"/></g></svg>
<svg class="abs" style="left:1232px;top:991px" width="9" height="9" viewBox="0 0 9 9"><path d="M1.500,1 V8 M7.500,1 L3.500,4.500 L7.500,8" fill="none" stroke="#333" stroke-width="1.200"/></svg>
<svg class="abs" style="left:1247px;top:976px" width="18" height="22" viewBox="0 0 18 22"><path d="M1.5,1.5 H11.5 L15.5,5.5 V19.5 H1.5 Z" fill="#fff" stroke="#666" stroke-width="1"/><path d="M11.500,1.500 L15.500,5.500 H11.500 Z" fill="#444"/></svg>
<div class="abs" style="left:1270px;top:973px;width:28px;height:28px;background:#ecd7a6;border:1px solid #d9c48f"></div>
<svg class="abs" style="left:1275px;top:975px" width="18" height="24" viewBox="0 0 18 24"><path d="M1.5,-6 H11.5 L15.5,-2 V7 H1.5 Z" fill="#fff" stroke="#777" stroke-width="1"/><path d="M1.5,11.5 H11.5 L15.5,15.5 V29.5 H1.5 Z" fill="#fff" stroke="#777" stroke-width="1"/><path d="M11.500,7 L15.500,11 V7 Z" fill="#555"/></svg>
<svg class="abs" style="left:1299px;top:978px" width="28" height="18" viewBox="0 0 28 18"><path d="M1.5,1.5 H6.5 L10.5,5.5 V14.5 H1.5 Z" fill="#fff" stroke="#bdbdbd" stroke-width="1"/><path d="M14.5,1.5 H19.5 L23.5,5.5 V14.5 H14.5 Z" fill="#fff" stroke="#bdbdbd" stroke-width="1"/></svg>
<svg class="abs" style="left:1327px;top:975px" width="26" height="24" viewBox="0 0 26 24"><path d="M1.5,-3 H6.5 L10.5,1 V7 H1.5 Z" fill="#fff" stroke="#bdbdbd" stroke-width="1"/><path d="M14.5,-3 H19.5 L23.5,1 V7 H14.5 Z" fill="#fff" stroke="#bdbdbd" stroke-width="1"/><path d="M1.5,12.5 H6.5 L10.5,16.5 V25.5 H1.5 Z" fill="#fff" stroke="#bdbdbd" stroke-width="1"/><path d="M14.5,12.5 H19.5 L23.5,16.5 V25.5 H14.5 Z" fill="#fff" stroke="#bdbdbd" stroke-width="1"/><path d="M7.500,7 L10.500,10 V7 Z M20.500,7 L23.500,10 V7 Z" fill="#999"/></svg>
<svg class="abs" style="left:1357px;top:974px" width="9" height="17" viewBox="0 0 9 17"><g fill="#a8a8a8"><rect x="0" y="0" width="1" height="1"/><rect x="0" y="2" width="1" height="1"/><rect x="0" y="4" width="1" height="1"/><rect x="0" y="6" width="1" height="1"/><rect x="0" y="8" width="1" height="1"/><rect x="0" y="10" width="1" height="1"/><rect x="0" y="12" width="1" height="1"/><rect x="0" y="14" width="1" height="1"/><rect x="2" y="0" width="1" height="1"/><rect x="2" y="2" width="1" height="1"/><rect x="2" y="4" width="1" height="1"/><rect x="2" y="6" width="1" height="1"/><rect x="2" y="8" width="1" height="1"/><rect x="2" y="10" width="1" height="1"/><rect x="2" y="12" width="1" height="1"/><rect x="2" y="14" width="1" height="1"/><rect x="4" y="0" width="1" height="1"/><rect x="4" y="2" width="1" height="1"/><rect x="4" y="4" width="1" height="1"/><rect x="4" y="6" width="1" height="1"/><rect x="4" y="8" width="1" height="1"/><rect x="4" y="10" width="1" height="1"/><rect x="4" y="12" width="1" height="1"/><rect x="4" y="14" width="1" height="1"/><rect x="6" y="0" width="1" height="1"/><rect x="6" y="2" width="1" height="1"/><rect x="6" y="4" width="1" height="1"/><rect x="6" y="6" width="1" height="1"/><rect x="6" y="8" width="1" height="1"/><rect x="6" y="10" width="1" height="1"/><rect x="6" y="12" width="1" height="1"/><rect x="6" y="14" width="1" height="1"/></g></svg>
<svg class="abs" style="left:1357px;top:991px" width="9" height="9" viewBox="0 0 9 9"><path d="M1.500,1 V8 M7.500,1 L3.500,4.500 L7.500,8" fill="none" stroke="#333" stroke-width="1.200"/></svg>
<div class="abs" style="left:1368.5px;top:975.5px;width:80.5px;height:22px;background:#fff;border:1px solid #bdbdbd;border-radius:3px"></div>
<span class="t" style="left:1372.5px;top:979.5px;font-size:12px;line-height:14px;color:#000;letter-spacing:-0.80px;">600%</span>
<svg class="abs" style="left:1435.5px;top:982.5px" width="10" height="8" viewBox="0 0 10 8"><path d="M2.2,2.6 L5,5.4 L7.8,2.6" fill="none" stroke="#222" stroke-width="1.4"/></svg>
<div class="abs" style="left:1452.5px;top:973px;width:1px;height:27px;background:#c8c8c8"></div>
<svg class="abs" style="left:1458.5px;top:976px" width="21" height="21" viewBox="0 0 21 21"><circle cx="10.500" cy="10.500" r="9.800" fill="#fff" stroke="#9a9a9a" stroke-width="1"/><path d="M5.500,10.500 H15.500" stroke="#3d9df0" stroke-width="1.600"/></svg>
<svg class="abs" style="left:1590.0px;top:976px" width="21" height="21" viewBox="0 0 21 21"><circle cx="10.500" cy="10.500" r="9.800" fill="#fff" stroke="#9a9a9a" stroke-width="1"/><path d="M5.500,10.500 H15.500 M10.500,5.500 V15.500" stroke="#3d9df0" stroke-width="1.600"/></svg>
<div class="abs" style="left:1485.5px;top:985px;width:68px;height:3px;background:#666;border-radius:1.500px"></div>
<div class="abs" style="left:1560px;top:985px;width:24.5px;height:3px;background:#c8c8c8;border-radius:1.500px"></div>
<div class="abs" style="left:1534.5px;top:980px;width:1px;height:13px;background:repeating-linear-gradient(#666 0 1px,transparent 1px 2px)"></div>
<svg class="abs" style="left:1542px;top:977px" width="19" height="19" viewBox="0 0 19 19"><circle cx="9.500" cy="9.500" r="8.500" fill="#f4f4f4" stroke="#666" stroke-width="1.400"/><circle cx="9.500" cy="9.500" r="2.800" fill="#555"/></svg>
<svg class="abs" style="left:1619px;top:974px" width="9" height="17" viewBox="0 0 9 17"><g fill="#a8a8a8"><rect x="0" y="0" width="1" height="1"/><rect x="0" y="2" width="1" height="1"/><rect x="0" y="4" width="1" height="1"/><rect x="0" y="6" width="1" height="1"/><rect x="0" y="8" width="1" height="1"/><rect x="0" y="10" width="1" height="1"/><rect x="0" y="12" width="1" height="1"/><rect x="0" y="14" width="1" height="1"/><rect x="2" y="0" width="1" height="1"/><rect x="2" y="2" width="1" height="1"/><rect x="2" y="4" width="1" height="1"/><rect x="2" y="6" width="1" height="1"/><rect x="2" y="8" width="1" height="1"/><rect x="2" y="10" width="1" height="1"/><rect x="2" y="12" width="1" height="1"/><rect x="2" y="14" width="1" height="1"/><rect x="4" y="0" width="1" height="1"/><rect x="4" y="2" width="1" height="1"/><rect x="4" y="4" width="1" height="1"/><rect x="4" y="6" width="1" height="1"/><rect x="4" y="8" width="1" height="1"/><rect x="4" y="10" width="1" height="1"/><rect x="4" y="12" width="1" height="1"/><rect x="4" y="14" width="1" height="1"/><rect x="6" y="0" width="1" height="1"/><rect x="6" y="2" width="1" height="1"/><rect x="6" y="4" width="1" height="1"/><rect x="6" y="6" width="1" height="1"/><rect x="6" y="8" width="1" height="1"/><rect x="6" y="10" width="1" height="1"/><rect x="6" y="12" width="1" height="1"/><rect x="6" y="14" width="1" height="1"/></g></svg>
<svg class="abs" style="left:1619px;top:991px" width="9" height="9" viewBox="0 0 9 9"><path d="M1.500,1 V8 M7.500,1 L3.500,4.500 L7.500,8" fill="none" stroke="#333" stroke-width="1.200"/></svg>
<svg class="abs" style="left:1633px;top:979px" width="17" height="15" viewBox="0 0 17 15"><rect x="0.500" y="0.500" width="16" height="14" fill="#fff" stroke="#a9c6e8"/><rect x="2.500" y="3" width="5" height="9" fill="#8fc0ea"/><path d="M9.500,4 H14.500 M9.500,7 H14.500 M9.500,10 H14.500" stroke="#c0c0c0"/></svg>
<svg class="abs" style="left:1657px;top:982.5px" width="10" height="8" viewBox="0 0 10 8"><path d="M2.2,2.6 L5,5.4 L7.8,2.6" fill="none" stroke="#aaa" stroke-width="1.3"/></svg>
<svg class="abs" style="left:1669px;top:970px" width="11" height="10" viewBox="0 0 11 10"><path d="M1.500,1.500 L5.500,5.500 L9.500,1.500 M1,8.500 H10" fill="none" stroke="#444" stroke-width="1.300"/></svg>
<svg class="abs" style="left:10px;top:1015px" width="25" height="23" viewBox="0 0 25 23"><rect x="0.750" y="0.750" width="23.500" height="21.500" rx="2" fill="#0a64c8" stroke="#0a58b4" stroke-width="1.500"/><rect x="2.500" y="2.500" width="8.500" height="18" rx="1" fill="#f4f8fd"/><rect x="12.500" y="2.500" width="10" height="10" fill="#4cc2ff"/><rect x="12.500" y="13.500" width="10" height="7" fill="#1590f0"/></svg>
<svg class="abs" style="left:599.5px;top:1015px" width="24" height="24" viewBox="0 0 24 24"><g fill="#1a8fe8"><rect x="0" y="0" width="11.300" height="11.300" rx="1"/><rect x="12.500" y="0" width="11.300" height="11.300" rx="1"/><rect x="0" y="12.500" width="11.300" height="11.300" rx="1"/><rect x="12.500" y="12.500" width="11.300" height="11.300" rx="1"/></g></svg>
<div class="abs" style="left:638px;top:1011px;width:98px;height:30px;background:#fcfcfc;border-radius:15px;border:1px solid #ececec"></div>
<svg class="abs" style="left:668px;top:1018px" width="16" height="16" viewBox="0 0 16 16"><circle cx="6.500" cy="6.500" r="5" fill="none" stroke="#222" stroke-width="1.500"/><path d="M10.200,10.200 L14.500,14.500" stroke="#222" stroke-width="1.700" stroke-linecap="round"/></svg>
<span class="t" style="left:688.5px;top:1020.8px;font-size:11.5px;line-height:12px;color:#000;letter-spacing:-0.13px;">Ara</span>
<svg class="abs" style="left:749px;top:1014px" width="26" height="26" viewBox="0 0 26 26"><defs><linearGradient id="tv" x1="0" y1="1" x2="1" y2="0"><stop offset="0" stop-color="#d8d8d8"/><stop offset="1" stop-color="#ffffff"/></linearGradient></defs><rect x="6" y="1" width="19" height="17" rx="2" fill="url(#tv)"/><path d="M1,7 H9 V17.500 H19 V24 H3 Q1,24 1,22 Z" fill="#1e1e1e"/></svg>
<svg class="abs" style="left:792px;top:1013px" width="28" height="27" viewBox="0 0 28 27"><defs><linearGradient id="ch" x1="0" y1="0" x2="1" y2="1"><stop offset="0" stop-color="#4a6ee8"/><stop offset="1" stop-color="#8a62d8"/></linearGradient></defs><path d="M14,1.500 Q26,1.500 26,12.500 Q26,23.500 14,23.500 Q10.500,23.500 8,22.500 L2.500,25.500 L4,19.500 Q2,16.500 2,12.500 Q2,1.500 14,1.500 Z" fill="url(#ch)"/></svg>
<svg class="abs" style="left:837px;top:1014px" width="27" height="25" viewBox="0 0 27 25"><path d="M1,3 Q1,1.500 2.500,1.500 H9 L11.500,4 H24 Q25.500,4 25.500,5.500 V9 H1 Z" fill="#e5a81a"/><rect x="1" y="6.500" width="24.500" height="17" rx="1.500" fill="#fcd34f"/><rect x="7" y="17" width="13" height="6.500" rx="1" fill="#2a7fd0"/></svg>
<svg class="abs" style="left:881px;top:1013px" width="27" height="27" viewBox="0 0 27 27"><defs><linearGradient id="eg" x1="0" y1="0" x2="1" y2="1"><stop offset="0" stop-color="#2ec4a6"/><stop offset="0.500" stop-color="#1b9de2"/><stop offset="1" stop-color="#1565c0"/></linearGradient></defs><circle cx="13.500" cy="13.500" r="12.500" fill="url(#eg)"/><path d="M6,15 Q6,8 13.500,8 Q20,8 21,13 Q21,16 17,16 H12 Q12,20 17,21.500 Q9,23 6,15 Z" fill="#f3f3f3"/><path d="M4,9 Q8,2.500 15,3 Q22,4 24.500,10 Q19,5.500 12,7 Q7,8.500 4,9 Z" fill="#4bd68a" opacity="0.800"/></svg>
<svg class="abs" style="left:925px;top:1013px" width="26" height="27" viewBox="0 0 26 27"><path d="M8,7 V4.500 Q8,1.500 13,1.500 Q18,1.500 18,4.500 V7" fill="none" stroke="#2aa0e8" stroke-width="2"/><path d="M1,7 H25 V22.500 Q25,25.500 22,25.500 H4 Q1,25.500 1,22.500 Z" fill="#1b4f9c"/><rect x="8" y="11" width="4.500" height="4.500" fill="#f25022"/><rect x="13.500" y="11" width="4.500" height="4.500" fill="#7fba00"/><rect x="8" y="16.500" width="4.500" height="4.500" fill="#00a4ef"/><rect x="13.500" y="16.500" width="4.500" height="4.500" fill="#ffb900"/></svg>
<svg class="abs" style="left:969px;top:1014px" width="26" height="26" viewBox="0 0 28 28"><circle cx="17" cy="10.500" r="7.500" fill="#fff" stroke="#f07a10" stroke-width="3.600"/><path d="M11.500,16.500 L3.500,25" stroke="#f07a10" stroke-width="4.500" stroke-linecap="round"/></svg>
<svg class="abs" style="left:1012px;top:1012px" width="30" height="30" viewBox="0 0 30 30"><circle cx="13" cy="14" r="12" fill="#fff"/><path d="M13,2 A12,12 0 0 1 23.400,8 H13 A6,6 0 0 0 7.800,11 L2.600,8 A12,12 0 0 1 13,2 Z" fill="#ea4335"/><path d="M2.600,8 A12,12 0 0 0 11,25.800 L16.200,17 A6,6 0 0 1 7.800,17 Z" fill="#34a853"/><path d="M23.400,8 A12,12 0 0 1 11,25.800 L18.200,17 A6,6 0 0 0 18.200,11 V8 Z" fill="#fbbc05"/><circle cx="13" cy="14" r="4.800" fill="#4285f4" stroke="#fff" stroke-width="1.200"/><rect x="15" y="14" width="14" height="14" rx="2" fill="#3c3c3c"/><text x="22" y="25.500" font-size="11" fill="#fff" text-anchor="middle" font-family="Liberation Sans,sans-serif">B</text></svg>
<div class="abs" style="left:1021px;top:1044.5px;width:8px;height:2.5px;background:#8a8a8a;border-radius:1.300px"></div>
<div class="abs" style="left:1050.5px;top:1007px;width:39px;height:39px;background:#fbfbfb;border-radius:5px;border:1px solid #e8e8e8"></div>
<svg class="abs" style="left:1058px;top:1013px" width="25" height="26" viewBox="0 0 25 26"><defs><linearGradient id="pg2" x1="0" y1="0" x2="0" y2="1"><stop offset="0" stop-color="#d8232f"/><stop offset="1" stop-color="#7a0a12"/></linearGradient></defs><rect x="0.500" y="0.500" width="24" height="25" rx="3" fill="url(#pg2)"/><text x="2.500" y="9" font-size="7.500" fill="#fff" font-family="Liberation Sans,sans-serif">PDF</text><path d="M9,20 L20,11 M11.500,22 L22.500,13.500 M8,17.500 L16,11.500" stroke="#fff" stroke-width="1.800"/><path d="M5.500,23 L7,19 L9.500,21.500 Z" fill="#fff"/></svg>
<div class="abs" style="left:1062.5px;top:1043.5px;width:16px;height:3px;background:#1a78d8;border-radius:1.500px"></div>
<svg class="abs" style="left:1503px;top:1021px" width="15" height="10" viewBox="0 0 15 10"><path d="M1.500,8 L7.500,2 L13.500,8" fill="none" stroke="#222" stroke-width="1.500"/></svg>
<svg class="abs" style="left:1529px;top:1018px" width="18" height="14" viewBox="0 0 18 14"><path d="M1,5.500 Q9,-2 17,5.500" fill="none" stroke="#b0b0b0" stroke-width="1.300"/><path d="M3.800,8.300 Q9,3.500 14.200,8.300" fill="none" stroke="#b0b0b0" stroke-width="1.300"/><path d="M6.500,11 Q9,8.800 11.500,11" fill="none" stroke="#444" stroke-width="1.300"/><circle cx="9" cy="12.700" r="1" fill="#222"/></svg>
<svg class="abs" style="left:1553px;top:1018px" width="20" height="16" viewBox="0 0 20 16"><path d="M1,5.500 H4 L8,2 V14 L4,10.500 H1 Z" fill="none" stroke="#222" stroke-width="1.200" stroke-linejoin="round"/><path d="M10.500,5.500 Q12.500,8 10.500,10.500 M12.800,3.500 Q16,8 12.800,12.500 M15,1.800 Q19.500,8 15,14.200" fill="none" stroke="#222" stroke-width="1.100"/></svg>
<span class="t" style="left:1611.0px;top:1012.3px;font-size:11.5px;line-height:12px;color:#000;letter-spacing:-0.66px;">13:10</span>
<span class="t" style="left:1588.0px;top:1027.8px;font-size:11.5px;line-height:12px;color:#000;letter-spacing:-0.30px;">4.01.2023</span>
<div class="abs" style="left:1644px;top:1018px;width:16px;height:16px;background:#0a64c8;border-radius:8px"></div>
<span class="t" style="left:1649.2px;top:1020.0px;font-size:10.5px;line-height:12px;color:#fff;letter-spacing:-0.23px;">9</span>
</div>
</body></html>
